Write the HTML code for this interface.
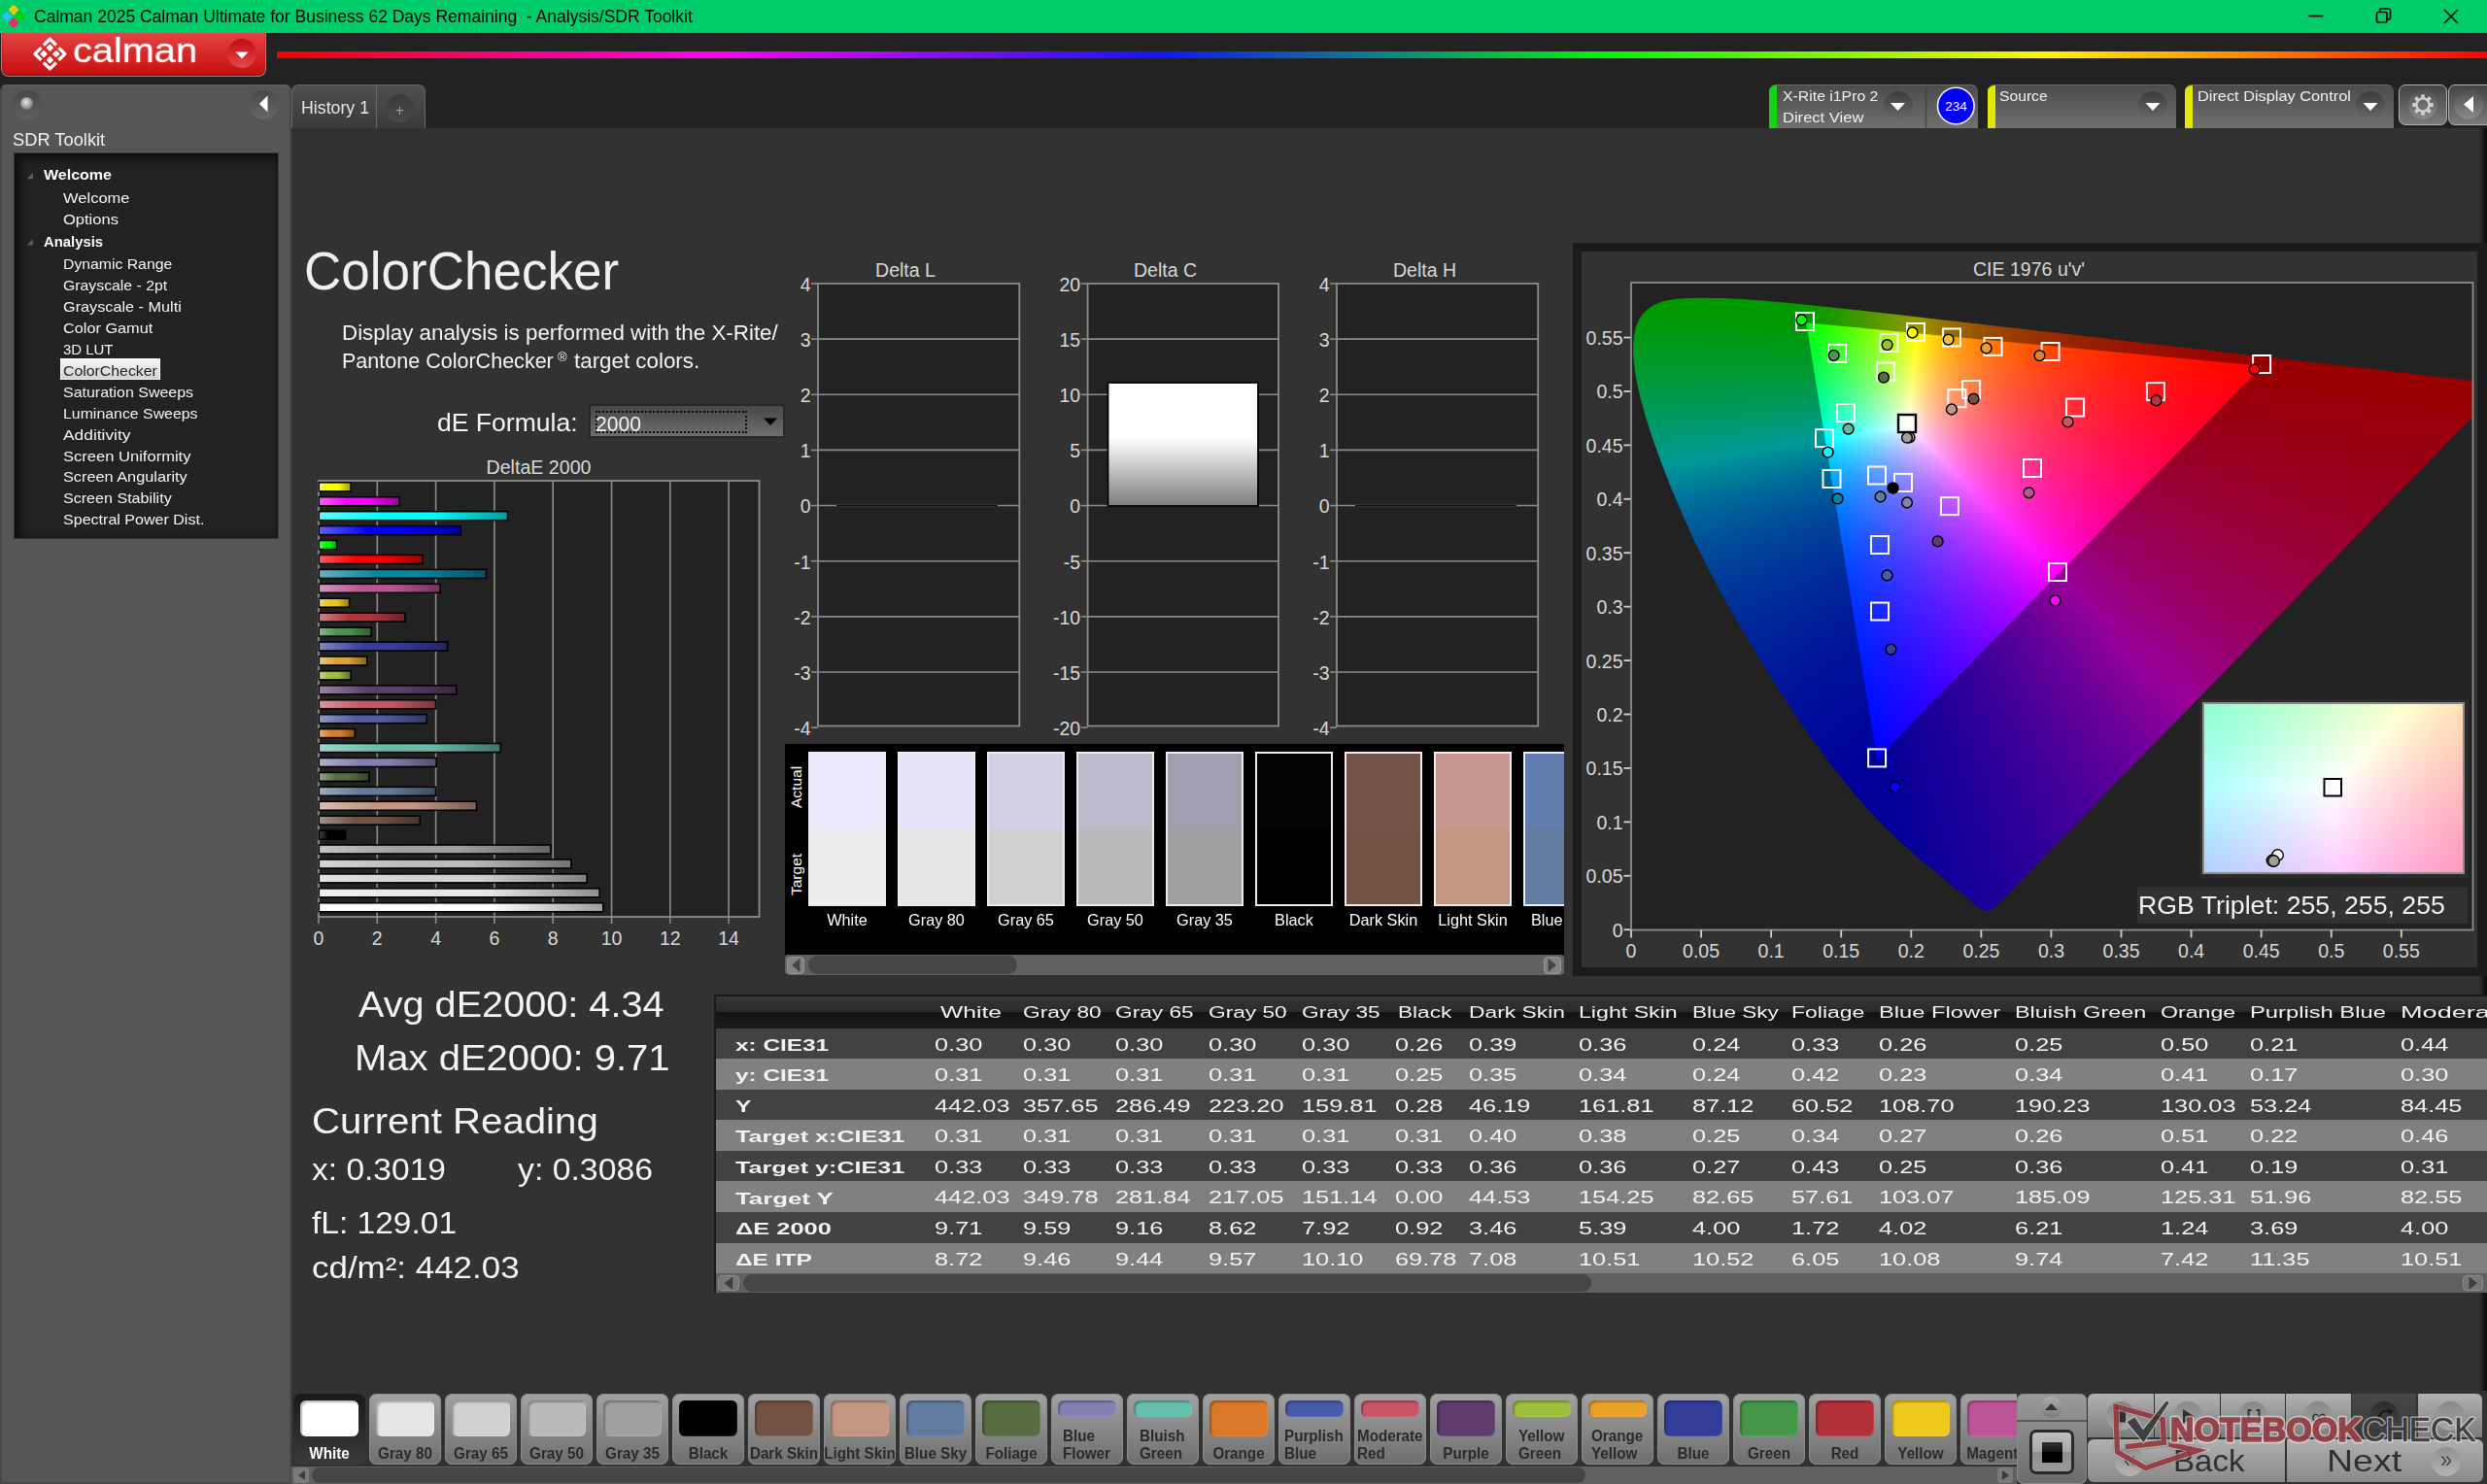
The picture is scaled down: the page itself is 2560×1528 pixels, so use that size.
<!DOCTYPE html><html><head><meta charset="utf-8"><title>Calman</title><style>
*{box-sizing:border-box;margin:0;padding:0}
html,body{width:2560px;height:1528px;overflow:hidden;background:#222}
body{font-family:"Liberation Sans",sans-serif;color:#f0f0f0;position:relative}
.a{position:absolute}
.cg{position:absolute;inset:0}
.t{position:absolute;white-space:nowrap;transform-origin:0 0;line-height:1}
svg{position:absolute;left:0;top:0}
svg text{font-family:"Liberation Sans",sans-serif}
#titlebar{left:0;top:0;width:2560px;height:34px;background:#00cc6a}
#left{left:0;top:87px;width:300px;height:1441px;background:#565656;border:2px solid #484848;border-top-color:#5c5c5c;border-radius:6px 6px 0 0}
#tree{left:14px;top:157px;width:273px;height:398px;background:#222;border:1px solid #3a3a3a;box-shadow:inset 6px 6px 8px rgba(0,0,0,.55),inset -2px -2px 4px rgba(0,0,0,.3)}
#main{left:300px;top:132px;width:2260px;height:1396px;background:#323232}
.tab{position:absolute;background:linear-gradient(#505050,#3a3a3a);border:1px solid #666;border-bottom:none;border-radius:7px 7px 0 0}
.dtab{position:absolute;top:87px;height:45px;background:linear-gradient(#4c4c4c,#707070);border-radius:7px 7px 0 0;border-top:1px solid #6a6a6a}
.rb{position:absolute;border-radius:50%;background:linear-gradient(#3c3c3c,#6a6a6a)}
</style></head><body>
<div id="main" class="a"></div>
<div class="a" style="left:2552px;top:132px;width:8px;height:1300px;background:linear-gradient(90deg,#323232,#151515 60%,#0e0e0e)"></div>
<div id="titlebar" class="a"></div>
<svg width="40" height="34" viewBox="0 0 40 34"><g transform="translate(14,16.9) rotate(45)"><path d="M-1.1 -7H-7V-1.1" fill="none" stroke="#ffc800" stroke-width="3.2" stroke-linejoin="round"/><rect x="-5.15" y="-5.15" width="4.3" height="4.3" rx="0.774" fill="#ffc800"/><path d="M1.1 -7H7V-1.1" fill="none" stroke="#00d200" stroke-width="3.2" stroke-linejoin="round"/><rect x="0.85" y="-5.15" width="4.3" height="4.3" rx="0.774" fill="#00d200"/><path d="M1.1 7H7V1.1" fill="none" stroke="#ff1e64" stroke-width="3.2" stroke-linejoin="round"/><rect x="0.85" y="0.85" width="4.3" height="4.3" rx="0.774" fill="#ff1e64"/><path d="M-1.1 7H-7V1.1" fill="none" stroke="#32beff" stroke-width="3.2" stroke-linejoin="round"/><rect x="-5.15" y="0.85" width="4.3" height="4.3" rx="0.774" fill="#32beff"/></g></svg>
<div class="t" style="left:35.3px;top:8.3px;font-size:18.8px;transform:scaleX(0.9320);color:#000;">Calman 2025 Calman Ultimate for Business 62 Days Remaining&nbsp; - Analysis/SDR Toolkit</div>
<svg width="2560" height="34" viewBox="0 0 2560 34" fill="none" stroke="#0a0a0a" stroke-width="1.7"><path d="M2376.300 16.500h15"/><rect x="2446.5" y="12.500" width="10.5" height="10.500" rx="2"/><path d="M2449.500 12.500v-1.500a2 2 0 0 1 2-2h7a2 2 0 0 1 2 2v7a2 2 0 0 1-2 2h-1.500"/><path d="M2516 10l14 14M2530 10l-14 14"/></svg>
<div class="a" style="left:1px;top:34px;width:273px;height:45px;border-radius:0 0 8px 8px;background:linear-gradient(#e24444,#d62a2a 45%,#c80e0e);border:1px solid #8a8a8a;border-top:none;box-shadow:inset 0 -1px 2px rgba(120,0,0,.5)"></div>
<svg width="280" height="80" viewBox="0 0 280 80"><g transform="translate(51.4,55.5) rotate(45)"><path d="M-1.8 -10.9H-10.9V-1.8" fill="none" stroke="#fff" stroke-width="3.3" stroke-linejoin="round"/><rect x="-7.3" y="-7.3" width="5.6" height="5.6" rx="1.008" fill="#fff"/><path d="M1.8 -10.9H10.9V-1.8" fill="none" stroke="#fff" stroke-width="3.3" stroke-linejoin="round"/><rect x="1.7" y="-7.3" width="5.6" height="5.6" rx="1.008" fill="#fff"/><path d="M1.8 10.9H10.9V1.8" fill="none" stroke="#fff" stroke-width="3.3" stroke-linejoin="round"/><rect x="1.7" y="1.7" width="5.6" height="5.6" rx="1.008" fill="#fff"/><path d="M-1.8 10.9H-10.9V1.8" fill="none" stroke="#fff" stroke-width="3.3" stroke-linejoin="round"/><rect x="-7.3" y="1.7" width="5.6" height="5.6" rx="1.008" fill="#fff"/></g>
<circle cx="249" cy="55" r="15" fill="url(#cbg)"/><defs><linearGradient id="cbg" x1="0" y1="0" x2="0" y2="1"><stop offset="0" stop-color="#c20a14"/><stop offset="1" stop-color="#e44a4a"/></linearGradient></defs><path d="M242.500 53.500h13l-6.500 7z" fill="#fff"/></svg>
<div class="t" style="left:75.0px;top:34.3px;font-size:35px;transform:scaleX(1.1349);color:#fff;text-shadow:0 0 2px rgba(255,255,255,.5)">calman</div>
<div class="a" style="left:284.700px;top:52.500px;width:2275.300px;height:7.800px;background:linear-gradient(90deg,#f40000 0%,#ff00f4 20%,#1414ff 40%,#00f40a 60%,#fff400 80%,#ff0000 100%)"></div>
<div class="tab" style="left:300px;top:87px;width:138px;height:45px"></div>
<div class="a" style="left:387px;top:88px;width:1px;height:44px;background:#686868"></div>
<div class="t" style="left:309.6px;top:102.1px;font-size:18px;transform:scaleX(0.9858);color:#e6e6e6;">History 1</div>
<div class="rb" style="left:397px;top:97px;width:29px;height:29px;background:linear-gradient(#3a3a3a,#4a4a4a)"></div>
<div class="t" style="left:406.5px;top:104.5px;font-size:17px;transform:scaleX(0.9050);color:#9a9a9a;">+</div>
<div class="dtab" style="left:1821px;width:215px;overflow:hidden"><div class="a" style="left:0;top:0;width:8px;height:45px;background:#14d214"></div></div>
<div class="dtab" style="left:2046px;width:194px;overflow:hidden"><div class="a" style="left:0;top:0;width:8px;height:45px;background:#e6e600"></div></div>
<div class="dtab" style="left:2249px;width:215px;overflow:hidden"><div class="a" style="left:0;top:0;width:8px;height:45px;background:#e6e600"></div></div>
<div class="t" style="left:1835.1px;top:90.5px;font-size:15.2px;transform:scaleX(1.0410);color:#f0f0f0;">X-Rite i1Pro 2</div>
<div class="t" style="left:1835.1px;top:112.8px;font-size:15.2px;transform:scaleX(1.0894);color:#f0f0f0;">Direct View</div>
<div class="t" style="left:2058.3px;top:90.5px;font-size:15.2px;transform:scaleX(1.0323);color:#f0f0f0;">Source</div>
<div class="t" style="left:2262.4px;top:90.5px;font-size:15.2px;transform:scaleX(1.0749);color:#f0f0f0;">Direct Display Control</div>
<div class="rb" style="left:1938.5px;top:94px;width:30px;height:30px"></div>
<div class="rb" style="left:2201px;top:94px;width:30px;height:30px"></div>
<div class="rb" style="left:2425px;top:94px;width:30px;height:30px"></div>
<svg width="2560" height="140" viewBox="0 0 2560 140"><g fill="#fff"><path d="M1946 106h15l-7.500 8z"/><path d="M2208.500 106h15l-7.500 8z"/><path d="M2432.500 106h15l-7.500 8z"/></g><path d="M1982.500 91v41" stroke="#444" stroke-width="1.500"/><circle cx="2013.300" cy="109" r="18.800" fill="#0000fa" stroke="#f4f4ff" stroke-width="1.600"/><text x="2002.300" y="114" font-size="12.400" fill="#fff" textLength="22.400" lengthAdjust="spacingAndGlyphs">234</text></svg>
<div class="a" style="left:2469px;top:87px;width:50px;height:42px;border-radius:7px;border:1.500px solid #b0b0b0;background:linear-gradient(#444,#7a7a7a)"></div>
<div class="a" style="left:2520px;top:87px;width:50px;height:42px;border-radius:7px;border:1.500px solid #b0b0b0;background:linear-gradient(#444,#7a7a7a)"></div>
<div class="rb" style="left:2479px;top:93px;width:30px;height:30px;background:linear-gradient(#505050,#8a8a8a)"></div>
<div class="rb" style="left:2526px;top:93px;width:30px;height:30px;background:linear-gradient(#505050,#8a8a8a)"></div>
<svg width="2560" height="140" viewBox="0 0 2560 140"><g transform="translate(2494,108)" fill="#cfcfcf"><rect x="-1.900" y="-10.800" width="3.800" height="4.200" rx=".8" transform="rotate(0)"/><rect x="-1.900" y="-10.800" width="3.800" height="4.200" rx=".8" transform="rotate(45)"/><rect x="-1.900" y="-10.800" width="3.800" height="4.200" rx=".8" transform="rotate(90)"/><rect x="-1.900" y="-10.800" width="3.800" height="4.200" rx=".8" transform="rotate(135)"/><rect x="-1.900" y="-10.800" width="3.800" height="4.200" rx=".8" transform="rotate(180)"/><rect x="-1.900" y="-10.800" width="3.800" height="4.200" rx=".8" transform="rotate(225)"/><rect x="-1.900" y="-10.800" width="3.800" height="4.200" rx=".8" transform="rotate(270)"/><rect x="-1.900" y="-10.800" width="3.800" height="4.200" rx=".8" transform="rotate(315)"/><circle r="6.600" fill="none" stroke="#cfcfcf" stroke-width="2.400"/></g><path d="M2546 99v17l-10-8.500z" fill="#fff"/></svg>
<div id="left" class="a"></div>
<div class="rb" style="left:13px;top:93px;width:30px;height:30px;background:linear-gradient(#484848,#606060)"></div>
<div class="rb" style="left:21px;top:100px;width:13px;height:13px;background:radial-gradient(circle at 45% 40%,#e8e8e8,#8a8a8a 60%,#555)"></div>
<div class="rb" style="left:256px;top:93px;width:30px;height:30px;background:linear-gradient(#484848,#686868)"></div>
<svg width="300" height="140" viewBox="0 0 300 140"><path d="M275.500 98.500v17l-8.500-8.500z" fill="#fff"/></svg>
<div class="t" style="left:13.4px;top:135.7px;font-size:17.6px;transform:scaleX(1.0392);color:#f0f0f0;">SDR Toolkit</div>
<div id="tree" class="a"></div>
<div class="t" style="left:45.0px;top:172.3px;font-size:15px;transform:scaleX(1.0673);color:#fff;font-weight:bold;">Welcome</div>
<svg width="300" height="600" viewBox="0 0 300 600"><path d="M34 184.3 v-6.500l-6.500 6.500z" fill="#5a5a5a"/></svg>
<div class="t" style="left:64.8px;top:196.0px;font-size:15px;transform:scaleX(1.1004);color:#f4f4f4;">Welcome</div>
<div class="t" style="left:64.8px;top:218.0px;font-size:15px;transform:scaleX(1.1003);color:#f4f4f4;">Options</div>
<div class="t" style="left:45.0px;top:240.5px;font-size:15px;transform:scaleX(0.9889);color:#fff;font-weight:bold;">Analysis</div>
<svg width="300" height="600" viewBox="0 0 300 600"><path d="M34 252.5 v-6.500l-6.500 6.500z" fill="#5a5a5a"/></svg>
<div class="t" style="left:64.8px;top:264.4px;font-size:15px;transform:scaleX(1.0513);color:#f4f4f4;">Dynamic Range</div>
<div class="t" style="left:64.8px;top:286.3px;font-size:15px;transform:scaleX(1.0531);color:#f4f4f4;">Grayscale - 2pt</div>
<div class="t" style="left:64.8px;top:308.2px;font-size:15px;transform:scaleX(1.0823);color:#f4f4f4;">Grayscale - Multi</div>
<div class="t" style="left:64.8px;top:330.0px;font-size:15px;transform:scaleX(1.0845);color:#f4f4f4;">Color Gamut</div>
<div class="t" style="left:64.8px;top:352.0px;font-size:15px;transform:scaleX(0.9966);color:#f4f4f4;">3D LUT</div>
<div class="a" style="left:61.800px;top:369px;width:103.200px;height:21.700px;background:linear-gradient(#f6f6f6,#d2d2d2);border:1px solid #fff"></div>
<div class="t" style="left:64.8px;top:374.1px;font-size:15px;transform:scaleX(1.0558);color:#222;">ColorChecker</div>
<div class="t" style="left:64.8px;top:396.0px;font-size:15px;transform:scaleX(1.0649);color:#f4f4f4;">Saturation Sweeps</div>
<div class="t" style="left:64.8px;top:418.3px;font-size:15px;transform:scaleX(1.0580);color:#f4f4f4;">Luminance Sweeps</div>
<div class="t" style="left:64.8px;top:440.2px;font-size:15px;transform:scaleX(1.1576);color:#f4f4f4;">Additivity</div>
<div class="t" style="left:64.8px;top:462.1px;font-size:15px;transform:scaleX(1.1031);color:#f4f4f4;">Screen Uniformity</div>
<div class="t" style="left:64.8px;top:483.2px;font-size:15px;transform:scaleX(1.0862);color:#f4f4f4;">Screen Angularity</div>
<div class="t" style="left:64.8px;top:505.1px;font-size:15px;transform:scaleX(1.0718);color:#f4f4f4;">Screen Stability</div>
<div class="t" style="left:64.8px;top:527.2px;font-size:15px;transform:scaleX(1.0699);color:#f4f4f4;">Spectral Power Dist.</div>
<div class="t" style="left:312.5px;top:250.5px;font-size:56px;transform:scaleX(0.9465);color:#f0f0f0;">ColorChecker</div>
<div class="t" style="left:351.9px;top:331.7px;font-size:22px;transform:scaleX(1.0167);color:#f4f4f4;">Display analysis is performed with the X-Rite/</div>
<div class="t" style="left:351.9px;top:361.0px;font-size:22px;transform:scaleX(0.9785);color:#f4f4f4;">Pantone ColorChecker</div>
<div class="t" style="left:574.2px;top:362.2px;font-size:12.5px;transform:scaleX(1.0414);color:#f4f4f4;">&#174;</div>
<div class="t" style="left:591.0px;top:361.0px;font-size:22px;transform:scaleX(1.0160);color:#f4f4f4;">target colors.</div>
<div class="t" style="left:450.1px;top:422.2px;font-size:26.3px;transform:scaleX(1.0100);color:#f4f4f4;">dE Formula:</div>
<div class="a" style="left:606.300px;top:416px;width:201.300px;height:35.200px;background:linear-gradient(#484848,#6e6e6e);border:2px solid #292929"></div>
<div class="a" style="left:612.500px;top:422.500px;width:156px;height:23px;border:2px dotted #0c0c0c"></div>
<div class="t" style="left:613.0px;top:426.3px;font-size:22px;transform:scaleX(0.9602);color:#f4f4f4;">2000</div>
<svg width="2560" height="460" viewBox="0 0 2560 460"><path d="M786 430.500h14l-7 7.500z" fill="#000"/></svg>
<div class="a" style="left:1618.500px;top:250px;width:941.500px;height:754.500px;background:#1b1b1b"></div>
<div class="a" style="left:1628px;top:259px;width:922px;height:737px;background:#323232"></div>
<div class="a" style="left:1679px;top:291px;width:867px;height:667px;background:#222"></div>
<div id="cie" style="position:absolute;left:1679px;top:291px;width:867px;height:667px;overflow:hidden">
<div style="position:absolute;inset:0;background:#000;isolation:isolate;clip-path:polygon(376.5px 641.4px,374.8px 642.8px,373.2px 644.1px,371.4px 645.0px,369.5px 645.7px,367.6px 646.2px,365.5px 646.4px,363.4px 646.3px,361.2px 646.0px,359.6px 644.9px,357.8px 643.5px,355.7px 641.9px,353.4px 640.0px,350.7px 637.8px,347.8px 635.3px,344.6px 632.6px,341.0px 629.6px,337.0px 626.3px,332.7px 622.8px,328.0px 618.9px,322.8px 614.6px,317.3px 610.1px,311.3px 605.1px,304.8px 599.8px,297.7px 593.9px,290.0px 587.3px,281.7px 579.9px,272.9px 571.8px,263.6px 562.9px,253.5px 552.8px,242.3px 540.7px,229.5px 526.0px,215.5px 508.9px,200.5px 489.5px,184.7px 467.9px,168.2px 444.0px,151.1px 417.8px,133.7px 389.8px,116.1px 360.4px,98.7px 330.3px,82.2px 300.0px,67.1px 269.9px,53.6px 240.5px,41.6px 212.4px,31.3px 186.0px,22.5px 161.7px,15.4px 139.8px,10.0px 120.4px,6.1px 103.3px,3.6px 88.4px,2.2px 75.5px,2.1px 64.3px,3.0px 54.5px,4.9px 46.0px,7.8px 38.8px,11.6px 32.8px,16.2px 27.9px,21.5px 24.0px,27.4px 21.2px,33.7px 19.1px,40.5px 17.7px,47.6px 16.8px,55.1px 16.3px,62.7px 15.9px,70.5px 15.8px,78.2px 15.8px,86.0px 15.9px,93.9px 16.1px,101.8px 16.4px,110.0px 16.8px,118.4px 17.3px,127.1px 17.9px,136.1px 18.6px,145.3px 19.4px,154.8px 20.2px,164.6px 21.2px,174.9px 22.2px,185.5px 23.3px,196.5px 24.4px,208.0px 25.7px,219.9px 27.0px,232.3px 28.3px,245.2px 29.8px,258.6px 31.3px,272.5px 32.8px,287.0px 34.5px,301.9px 36.2px,317.4px 38.0px,333.5px 39.8px,350.1px 41.7px,367.2px 43.7px,384.8px 45.7px,403.0px 47.8px,421.6px 50.0px,440.6px 52.1px,460.0px 54.3px,479.8px 56.6px,499.7px 58.9px,519.7px 61.2px,539.4px 63.5px,558.8px 65.7px,578.0px 67.9px,597.2px 70.1px,616.1px 72.3px,634.4px 74.4px,651.9px 76.4px,668.7px 78.3px,684.7px 80.1px,700.1px 81.9px,714.6px 83.6px,728.2px 85.2px,740.9px 86.6px,752.9px 88.0px,764.0px 89.3px,774.4px 90.5px,784.1px 91.6px,793.3px 92.6px,801.9px 93.6px,810.2px 94.6px,818.0px 95.5px,825.3px 96.3px,832.2px 97.1px,838.6px 97.9px,844.4px 98.5px,849.8px 99.2px,854.7px 99.7px,859.2px 100.2px,863.4px 100.7px,867.1px 101.1px,870.5px 101.5px,873.6px 101.9px,876.3px 102.2px,878.7px 102.5px,880.8px 102.7px,882.7px 102.9px,884.2px 103.1px,885.6px 103.3px,886.9px 103.4px,888.0px 103.5px,889.1px 103.7px,890.2px 103.8px,891.2px 103.9px,892.2px 104.0px,893.2px 104.1px,894.1px 104.2px,894.9px 104.3px,895.7px 104.4px,896.4px 104.5px,897.1px 104.6px,897.6px 104.6px,898.0px 104.7px,898.4px 104.7px,898.6px 104.8px,898.7px 104.8px,898.6px 104.8px)">
<div class="cg" style="mix-blend-mode:screen;isolation:isolate"><div class="cg" style="background:conic-gradient(at 252.8px 491.2px,#910000 0.00deg,#c00000 2.50deg,#ea0000 4.50deg,#ff0000 5.50deg,#ff0000 170.50deg,#000000 171.00deg,#000000 350.50deg,#020000 351.00deg,#2d0000 354.00deg,#5d0000 357.00deg,#880000 359.50deg,#910000 360.00deg)"></div><div class="cg" style="mix-blend-mode:darken;background:conic-gradient(at 180.2px 42.7px,#ff0000 0.00deg,#ff0000 134.50deg,#fd0000 135.00deg,#dd0000 138.00deg,#bb0000 141.50deg,#9a0000 145.50deg,#780000 150.00deg,#540000 155.50deg,#2e0000 162.00deg,#010000 170.50deg,#000000 171.00deg,#000000 350.50deg,#ff0000 351.00deg,#ff0000 360.00deg)"></div></div>
<div class="cg" style="mix-blend-mode:screen;isolation:isolate"><div class="cg" style="background:conic-gradient(at 252.8px 491.2px,#00ff00 0.00deg,#00ff00 5.00deg,#00fe00 5.50deg,#00e900 6.50deg,#00ce00 8.00deg,#00b700 9.50deg,#00a300 11.00deg,#008d00 13.00deg,#007600 15.50deg,#006000 18.50deg,#004b00 22.00deg,#003800 26.00deg,#002500 31.00deg,#001100 37.50deg,#000000 44.50deg,#000000 224.00deg,#00ff00 224.50deg,#00ff00 360.00deg)"></div><div class="cg" style="mix-blend-mode:darken;background:conic-gradient(at 649.7px 86.6px,#00ff00 0.00deg,#00ff00 44.00deg,#000000 44.50deg,#000000 224.50deg,#001400 231.50deg,#002700 237.00deg,#003a00 241.50deg,#004d00 245.00deg,#006000 248.00deg,#007300 250.50deg,#008b00 253.00deg,#00a100 255.00deg,#00b500 256.50deg,#00cd00 258.00deg,#00e800 259.50deg,#00fe00 260.50deg,#00ff00 261.00deg,#00ff00 360.00deg)"></div></div>
<div class="cg" style="mix-blend-mode:screen;isolation:isolate"><div class="cg" style="background:conic-gradient(at 180.2px 42.7px,#000000 0.00deg,#000000 95.00deg,#000001 95.50deg,#000029 104.50deg,#00004c 111.50deg,#00006c 117.00deg,#00008c 122.00deg,#0000aa 126.00deg,#0000c8 129.50deg,#0000e6 132.50deg,#0000fb 134.50deg,#0000ff 135.00deg,#0000ff 275.00deg,#000000 275.50deg,#000000 360.00deg)"></div><div class="cg" style="mix-blend-mode:darken;background:conic-gradient(at 649.7px 86.6px,#000000 0.00deg,#000000 95.00deg,#0000ff 95.50deg,#0000ff 260.50deg,#0000ea 261.50deg,#0000c0 263.50deg,#000090 266.00deg,#000065 268.50deg,#00003d 271.00deg,#000012 274.00deg,#000004 275.00deg,#000000 275.50deg,#000000 360.00deg)"></div></div>
<div class="cg" style="background:rgba(0,0,0,.4);clip-path:polygon(evenodd,0 0,867px 0,867px 667px,0 667px,0 0,649.7px 85.9px,180.3px 41.3px,252.9px 490.6px,649.7px 85.9px)"></div>
</div></div>
<div class="a" style="left:2263.500px;top:719.500px;width:277px;height:184px;background:#2b2b2b"></div>
<div class="a" style="left:2266.500px;top:722.500px;width:270.500px;height:177.500px;background:#8c8c8c"></div>
<div style="position:absolute;left:2268.5px;top:724.5px;width:266.5px;height:173.5px;background:#000;isolation:isolate;overflow:hidden">
<div class="cg" style="mix-blend-mode:screen;isolation:isolate"><div class="cg" style="background:conic-gradient(at -790.8px 1080.6px,#880000 35.896deg,#ac0000 38.341deg,#d10000 40.511deg,#f60000 42.474deg,#ff0000 42.887deg,#ff0000 49.671deg)"></div><div class="cg" style="mix-blend-mode:darken;background:conic-gradient(at 60.6px -915.2px,#ff0000 167.022deg,#ff0000 175.897deg,#cb0000 180.633deg,#a90000 184.089deg)"></div></div>
<div class="cg" style="mix-blend-mode:screen;isolation:isolate"><div class="cg" style="background:conic-gradient(at -790.8px 1080.6px,#00ff00 35.896deg,#00ff00 42.887deg,#00df00 44.540deg,#00c100 46.365deg,#00a300 48.431deg,#009400 49.671deg)"></div><div class="cg" style="mix-blend-mode:darken;background:conic-gradient(at 1990.5px 82.7px,#00c200 266.685deg,#00e800 268.737deg,#00ff00 269.914deg,#00ff00 273.047deg)"></div></div>
<div class="cg" style="mix-blend-mode:screen;isolation:isolate"><div class="cg" style="background:conic-gradient(at 60.6px -915.2px,#0000b1 167.022deg,#0000cb 170.521deg,#0000e6 173.550deg,#0000ff 175.897deg,#0000ff 184.089deg)"></div><div class="cg" style="mix-blend-mode:darken;background:conic-gradient(at 1990.5px 82.7px,#0000ff 266.685deg,#0000fe 269.914deg,#0000df 271.536deg,#0000c5 273.047deg)"></div></div>
</div>
<div class="a" style="left:2200px;top:913px;width:340px;height:37.500px;background:#323232"></div>
<div class="t" style="left:2200.5px;top:919.9px;font-size:25.7px;transform:scaleX(1.0385);color:#f4f4f4;">RGB Triplet: 255, 255, 255</div>
<svg width="2560" height="1528" viewBox="0 0 2560 1528">
<defs><linearGradient id="b0"><stop offset="0" stop-color="#ffff60"/><stop offset=".35" stop-color="#ffff00"/><stop offset=".6" stop-color="#ffff00"/><stop offset="1" stop-color="#9e9e00"/></linearGradient><linearGradient id="b1"><stop offset="0" stop-color="#ff60ff"/><stop offset=".35" stop-color="#ff00ff"/><stop offset=".6" stop-color="#ff00ff"/><stop offset="1" stop-color="#9e009e"/></linearGradient><linearGradient id="b2"><stop offset="0" stop-color="#60ffff"/><stop offset=".35" stop-color="#00ffff"/><stop offset=".6" stop-color="#00ffff"/><stop offset="1" stop-color="#009e9e"/></linearGradient><linearGradient id="b3"><stop offset="0" stop-color="#6060ff"/><stop offset=".35" stop-color="#0000ff"/><stop offset=".6" stop-color="#0000ff"/><stop offset="1" stop-color="#00009e"/></linearGradient><linearGradient id="b4"><stop offset="0" stop-color="#60ff60"/><stop offset=".35" stop-color="#00ff00"/><stop offset=".6" stop-color="#00ff00"/><stop offset="1" stop-color="#009e00"/></linearGradient><linearGradient id="b5"><stop offset="0" stop-color="#ff6060"/><stop offset=".35" stop-color="#ff0000"/><stop offset=".6" stop-color="#ff0000"/><stop offset="1" stop-color="#9e0000"/></linearGradient><linearGradient id="b6"><stop offset="0" stop-color="#65b3c4"/><stop offset=".35" stop-color="#0885a1"/><stop offset=".6" stop-color="#0885a1"/><stop offset="1" stop-color="#045263"/></linearGradient><linearGradient id="b7"><stop offset="0" stop-color="#d496bd"/><stop offset=".35" stop-color="#bb5695"/><stop offset=".6" stop-color="#bb5695"/><stop offset="1" stop-color="#73355c"/></linearGradient><linearGradient id="b8"><stop offset="0" stop-color="#f0dc74"/><stop offset=".35" stop-color="#e7c71f"/><stop offset=".6" stop-color="#e7c71f"/><stop offset="1" stop-color="#8f7b13"/></linearGradient><linearGradient id="b9"><stop offset="0" stop-color="#cd8286"/><stop offset=".35" stop-color="#af363c"/><stop offset=".6" stop-color="#af363c"/><stop offset="1" stop-color="#6c2125"/></linearGradient><linearGradient id="b10"><stop offset="0" stop-color="#8cbc8e"/><stop offset=".35" stop-color="#469449"/><stop offset=".6" stop-color="#469449"/><stop offset="1" stop-color="#2b5b2d"/></linearGradient><linearGradient id="b11"><stop offset="0" stop-color="#8386bd"/><stop offset=".35" stop-color="#383d96"/><stop offset=".6" stop-color="#383d96"/><stop offset="1" stop-color="#22255d"/></linearGradient><linearGradient id="b12"><stop offset="0" stop-color="#ebc57d"/><stop offset=".35" stop-color="#e0a32e"/><stop offset=".6" stop-color="#e0a32e"/><stop offset="1" stop-color="#8a651c"/></linearGradient><linearGradient id="b13"><stop offset="0" stop-color="#c2d588"/><stop offset=".35" stop-color="#9dbc40"/><stop offset=".6" stop-color="#9dbc40"/><stop offset="1" stop-color="#617427"/></linearGradient><linearGradient id="b14"><stop offset="0" stop-color="#9b86a3"/><stop offset=".35" stop-color="#5e3c6c"/><stop offset=".6" stop-color="#5e3c6c"/><stop offset="1" stop-color="#3a2542"/></linearGradient><linearGradient id="b15"><stop offset="0" stop-color="#d8989e"/><stop offset=".35" stop-color="#c15a63"/><stop offset=".6" stop-color="#c15a63"/><stop offset="1" stop-color="#77373d"/></linearGradient><linearGradient id="b16"><stop offset="0" stop-color="#9299c7"/><stop offset=".35" stop-color="#505ba6"/><stop offset=".6" stop-color="#505ba6"/><stop offset="1" stop-color="#313866"/></linearGradient><linearGradient id="b17"><stop offset="0" stop-color="#e5af7c"/><stop offset=".35" stop-color="#d67e2c"/><stop offset=".6" stop-color="#d67e2c"/><stop offset="1" stop-color="#844e1b"/></linearGradient><linearGradient id="b18"><stop offset="0" stop-color="#a0d6ca"/><stop offset=".35" stop-color="#67bdaa"/><stop offset=".6" stop-color="#67bdaa"/><stop offset="1" stop-color="#3f7569"/></linearGradient><linearGradient id="b19"><stop offset="0" stop-color="#b3b0ce"/><stop offset=".35" stop-color="#8580b1"/><stop offset=".6" stop-color="#8580b1"/><stop offset="1" stop-color="#524f6d"/></linearGradient><linearGradient id="b20"><stop offset="0" stop-color="#96a38a"/><stop offset=".35" stop-color="#576c43"/><stop offset=".6" stop-color="#576c43"/><stop offset="1" stop-color="#354229"/></linearGradient><linearGradient id="b21"><stop offset="0" stop-color="#9dacc2"/><stop offset=".35" stop-color="#627a9d"/><stop offset=".6" stop-color="#627a9d"/><stop offset="1" stop-color="#3c4b61"/></linearGradient><linearGradient id="b22"><stop offset="0" stop-color="#d9bdb1"/><stop offset=".35" stop-color="#c29682"/><stop offset=".6" stop-color="#c29682"/><stop offset="1" stop-color="#785d50"/></linearGradient><linearGradient id="b23"><stop offset="0" stop-color="#a8938b"/><stop offset=".35" stop-color="#735244"/><stop offset=".6" stop-color="#735244"/><stop offset="1" stop-color="#47322a"/></linearGradient><linearGradient id="b24"><stop offset="0" stop-color="#464646"/><stop offset=".35" stop-color="#000000"/><stop offset=".6" stop-color="#000000"/><stop offset="1" stop-color="#000000"/></linearGradient><linearGradient id="b25"><stop offset="0" stop-color="#c4c4c4"/><stop offset=".35" stop-color="#a0a0a0"/><stop offset=".6" stop-color="#a0a0a0"/><stop offset="1" stop-color="#636363"/></linearGradient><linearGradient id="b26"><stop offset="0" stop-color="#d4d4d4"/><stop offset=".35" stop-color="#bababa"/><stop offset=".6" stop-color="#bababa"/><stop offset="1" stop-color="#737373"/></linearGradient><linearGradient id="b27"><stop offset="0" stop-color="#e2e2e2"/><stop offset=".35" stop-color="#d1d1d1"/><stop offset=".6" stop-color="#d1d1d1"/><stop offset="1" stop-color="#818181"/></linearGradient><linearGradient id="b28"><stop offset="0" stop-color="#efefef"/><stop offset=".35" stop-color="#e6e6e6"/><stop offset=".6" stop-color="#e6e6e6"/><stop offset="1" stop-color="#8e8e8e"/></linearGradient><linearGradient id="b29"><stop offset="0" stop-color="#ffffff"/><stop offset=".35" stop-color="#ffffff"/><stop offset=".6" stop-color="#ffffff"/><stop offset="1" stop-color="#9e9e9e"/></linearGradient></defs><rect x="328" y="495" width="453.5" height="449" fill="#222" stroke="#8c8c8c" stroke-width="1.800"/>
<path d="M388.3 495V944" stroke="#8c8c8c" stroke-width="1.600"/>
<path d="M448.6 495V944" stroke="#8c8c8c" stroke-width="1.600"/>
<path d="M508.9 495V944" stroke="#8c8c8c" stroke-width="1.600"/>
<path d="M569.2 495V944" stroke="#8c8c8c" stroke-width="1.600"/>
<path d="M629.5 495V944" stroke="#8c8c8c" stroke-width="1.600"/>
<path d="M689.8 495V944" stroke="#8c8c8c" stroke-width="1.600"/>
<path d="M750.1 495V944" stroke="#8c8c8c" stroke-width="1.600"/>
<path d="M328 944v7" stroke="#8c8c8c" stroke-width="1.600"/>
<text x="328" y="973" font-size="19.500" fill="#d8d8d8" text-anchor="middle">0</text>
<path d="M388.3 944v7" stroke="#8c8c8c" stroke-width="1.600"/>
<text x="388.3" y="973" font-size="19.500" fill="#d8d8d8" text-anchor="middle">2</text>
<path d="M448.6 944v7" stroke="#8c8c8c" stroke-width="1.600"/>
<text x="448.6" y="973" font-size="19.500" fill="#d8d8d8" text-anchor="middle">4</text>
<path d="M508.9 944v7" stroke="#8c8c8c" stroke-width="1.600"/>
<text x="508.9" y="973" font-size="19.500" fill="#d8d8d8" text-anchor="middle">6</text>
<path d="M569.2 944v7" stroke="#8c8c8c" stroke-width="1.600"/>
<text x="569.2" y="973" font-size="19.500" fill="#d8d8d8" text-anchor="middle">8</text>
<path d="M629.5 944v7" stroke="#8c8c8c" stroke-width="1.600"/>
<text x="629.5" y="973" font-size="19.500" fill="#d8d8d8" text-anchor="middle">10</text>
<path d="M689.8 944v7" stroke="#8c8c8c" stroke-width="1.600"/>
<text x="689.8" y="973" font-size="19.500" fill="#d8d8d8" text-anchor="middle">12</text>
<path d="M750.1 944v7" stroke="#8c8c8c" stroke-width="1.600"/>
<text x="750.1" y="973" font-size="19.500" fill="#d8d8d8" text-anchor="middle">14</text>
<text x="554.500" y="488" font-size="19.500" fill="#d8d8d8" text-anchor="middle" textLength="108" lengthAdjust="spacingAndGlyphs">DeltaE 2000</text>
<rect x="328.3" y="496.8" width="32.865" height="9" fill="url(#b0)" stroke="#000" stroke-width="1.600"/>
<rect x="328.3" y="511.73" width="82.6125" height="9" fill="url(#b1)" stroke="#000" stroke-width="1.600"/>
<rect x="328.3" y="526.66" width="194.167" height="9" fill="url(#b2)" stroke="#000" stroke-width="1.600"/>
<rect x="328.3" y="541.59" width="145.927" height="9" fill="url(#b3)" stroke="#000" stroke-width="1.600"/>
<rect x="328.3" y="556.52" width="18.393" height="9" fill="url(#b4)" stroke="#000" stroke-width="1.600"/>
<rect x="328.3" y="571.45" width="106.732" height="9" fill="url(#b5)" stroke="#000" stroke-width="1.600"/>
<rect x="328.3" y="586.38" width="172.158" height="9" fill="url(#b6)" stroke="#000" stroke-width="1.600"/>
<rect x="328.3" y="601.31" width="124.823" height="9" fill="url(#b7)" stroke="#000" stroke-width="1.600"/>
<rect x="328.3" y="616.24" width="31.3575" height="9" fill="url(#b8)" stroke="#000" stroke-width="1.600"/>
<rect x="328.3" y="631.17" width="88.6425" height="9" fill="url(#b9)" stroke="#000" stroke-width="1.600"/>
<rect x="328.3" y="646.1" width="53.97" height="9" fill="url(#b10)" stroke="#000" stroke-width="1.600"/>
<rect x="328.3" y="661.03" width="132.36" height="9" fill="url(#b11)" stroke="#000" stroke-width="1.600"/>
<rect x="328.3" y="675.96" width="49.4475" height="9" fill="url(#b12)" stroke="#000" stroke-width="1.600"/>
<rect x="328.3" y="690.89" width="32.865" height="9" fill="url(#b13)" stroke="#000" stroke-width="1.600"/>
<rect x="328.3" y="705.82" width="141.405" height="9" fill="url(#b14)" stroke="#000" stroke-width="1.600"/>
<rect x="328.3" y="720.75" width="120.3" height="9" fill="url(#b15)" stroke="#000" stroke-width="1.600"/>
<rect x="328.3" y="735.68" width="110.953" height="9" fill="url(#b16)" stroke="#000" stroke-width="1.600"/>
<rect x="328.3" y="750.61" width="37.086" height="9" fill="url(#b17)" stroke="#000" stroke-width="1.600"/>
<rect x="328.3" y="765.54" width="186.931" height="9" fill="url(#b18)" stroke="#000" stroke-width="1.600"/>
<rect x="328.3" y="780.47" width="120.903" height="9" fill="url(#b19)" stroke="#000" stroke-width="1.600"/>
<rect x="328.3" y="795.4" width="51.558" height="9" fill="url(#b20)" stroke="#000" stroke-width="1.600"/>
<rect x="328.3" y="810.33" width="120.3" height="9" fill="url(#b21)" stroke="#000" stroke-width="1.600"/>
<rect x="328.3" y="825.26" width="162.208" height="9" fill="url(#b22)" stroke="#000" stroke-width="1.600"/>
<rect x="328.3" y="840.19" width="104.019" height="9" fill="url(#b23)" stroke="#000" stroke-width="1.600"/>
<rect x="328.3" y="855.12" width="27.438" height="9" fill="url(#b24)" stroke="#000" stroke-width="1.600"/>
<rect x="328.3" y="870.05" width="238.488" height="9" fill="url(#b25)" stroke="#000" stroke-width="1.600"/>
<rect x="328.3" y="884.98" width="259.593" height="9" fill="url(#b26)" stroke="#000" stroke-width="1.600"/>
<rect x="328.3" y="899.91" width="275.874" height="9" fill="url(#b27)" stroke="#000" stroke-width="1.600"/>
<rect x="328.3" y="914.84" width="288.838" height="9" fill="url(#b28)" stroke="#000" stroke-width="1.600"/>
<rect x="328.3" y="929.77" width="292.457" height="9" fill="url(#b29)" stroke="#000" stroke-width="1.600"/>
<rect x="842" y="292" width="207.3" height="455.5" fill="#222" stroke="#8c8c8c" stroke-width="1.800"/>
<path d="M835 292h7" stroke="#8c8c8c" stroke-width="1.600"/>
<text x="834.5" y="299.8" font-size="19.500" fill="#d8d8d8" text-anchor="end">4</text>
<path d="M842 349.14H1049.3" stroke="#8c8c8c" stroke-width="1.600"/>
<path d="M835 349.14h7" stroke="#8c8c8c" stroke-width="1.600"/>
<text x="834.5" y="356.94" font-size="19.500" fill="#d8d8d8" text-anchor="end">3</text>
<path d="M842 406.28H1049.3" stroke="#8c8c8c" stroke-width="1.600"/>
<path d="M835 406.28h7" stroke="#8c8c8c" stroke-width="1.600"/>
<text x="834.5" y="414.08" font-size="19.500" fill="#d8d8d8" text-anchor="end">2</text>
<path d="M842 463.42H1049.3" stroke="#8c8c8c" stroke-width="1.600"/>
<path d="M835 463.42h7" stroke="#8c8c8c" stroke-width="1.600"/>
<text x="834.5" y="471.22" font-size="19.500" fill="#d8d8d8" text-anchor="end">1</text>
<path d="M842 520.56H1049.3" stroke="#8c8c8c" stroke-width="1.600"/>
<path d="M835 520.56h7" stroke="#8c8c8c" stroke-width="1.600"/>
<text x="834.5" y="528.36" font-size="19.500" fill="#d8d8d8" text-anchor="end">0</text>
<path d="M842 577.7H1049.3" stroke="#8c8c8c" stroke-width="1.600"/>
<path d="M835 577.7h7" stroke="#8c8c8c" stroke-width="1.600"/>
<text x="834.5" y="585.5" font-size="19.500" fill="#d8d8d8" text-anchor="end">-1</text>
<path d="M842 634.84H1049.3" stroke="#8c8c8c" stroke-width="1.600"/>
<path d="M835 634.84h7" stroke="#8c8c8c" stroke-width="1.600"/>
<text x="834.5" y="642.64" font-size="19.500" fill="#d8d8d8" text-anchor="end">-2</text>
<path d="M842 691.98H1049.3" stroke="#8c8c8c" stroke-width="1.600"/>
<path d="M835 691.98h7" stroke="#8c8c8c" stroke-width="1.600"/>
<text x="834.5" y="699.78" font-size="19.500" fill="#d8d8d8" text-anchor="end">-3</text>
<path d="M835 749.12h7" stroke="#8c8c8c" stroke-width="1.600"/>
<text x="834.5" y="756.92" font-size="19.500" fill="#d8d8d8" text-anchor="end">-4</text>
<text x="932" y="285" font-size="19.500" fill="#d8d8d8" text-anchor="middle">Delta L</text>
<rect x="1119.6" y="292" width="196.4" height="455.5" fill="#222" stroke="#8c8c8c" stroke-width="1.800"/>
<path d="M1112.6 292h7" stroke="#8c8c8c" stroke-width="1.600"/>
<text x="1112.1" y="299.8" font-size="19.500" fill="#d8d8d8" text-anchor="end">20</text>
<path d="M1119.6 349.14H1316" stroke="#8c8c8c" stroke-width="1.600"/>
<path d="M1112.6 349.14h7" stroke="#8c8c8c" stroke-width="1.600"/>
<text x="1112.1" y="356.94" font-size="19.500" fill="#d8d8d8" text-anchor="end">15</text>
<path d="M1119.6 406.28H1316" stroke="#8c8c8c" stroke-width="1.600"/>
<path d="M1112.6 406.28h7" stroke="#8c8c8c" stroke-width="1.600"/>
<text x="1112.1" y="414.08" font-size="19.500" fill="#d8d8d8" text-anchor="end">10</text>
<path d="M1119.6 463.42H1316" stroke="#8c8c8c" stroke-width="1.600"/>
<path d="M1112.6 463.42h7" stroke="#8c8c8c" stroke-width="1.600"/>
<text x="1112.1" y="471.22" font-size="19.500" fill="#d8d8d8" text-anchor="end">5</text>
<path d="M1119.6 520.56H1316" stroke="#8c8c8c" stroke-width="1.600"/>
<path d="M1112.6 520.56h7" stroke="#8c8c8c" stroke-width="1.600"/>
<text x="1112.1" y="528.36" font-size="19.500" fill="#d8d8d8" text-anchor="end">0</text>
<path d="M1119.6 577.7H1316" stroke="#8c8c8c" stroke-width="1.600"/>
<path d="M1112.6 577.7h7" stroke="#8c8c8c" stroke-width="1.600"/>
<text x="1112.1" y="585.5" font-size="19.500" fill="#d8d8d8" text-anchor="end">-5</text>
<path d="M1119.6 634.84H1316" stroke="#8c8c8c" stroke-width="1.600"/>
<path d="M1112.6 634.84h7" stroke="#8c8c8c" stroke-width="1.600"/>
<text x="1112.1" y="642.64" font-size="19.500" fill="#d8d8d8" text-anchor="end">-10</text>
<path d="M1119.6 691.98H1316" stroke="#8c8c8c" stroke-width="1.600"/>
<path d="M1112.6 691.98h7" stroke="#8c8c8c" stroke-width="1.600"/>
<text x="1112.1" y="699.78" font-size="19.500" fill="#d8d8d8" text-anchor="end">-15</text>
<path d="M1112.6 749.12h7" stroke="#8c8c8c" stroke-width="1.600"/>
<text x="1112.1" y="756.92" font-size="19.500" fill="#d8d8d8" text-anchor="end">-20</text>
<text x="1199.5" y="285" font-size="19.500" fill="#d8d8d8" text-anchor="middle">Delta C</text>
<rect x="1376" y="292" width="207.2" height="455.5" fill="#222" stroke="#8c8c8c" stroke-width="1.800"/>
<path d="M1369 292h7" stroke="#8c8c8c" stroke-width="1.600"/>
<text x="1368.5" y="299.8" font-size="19.500" fill="#d8d8d8" text-anchor="end">4</text>
<path d="M1376 349.14H1583.2" stroke="#8c8c8c" stroke-width="1.600"/>
<path d="M1369 349.14h7" stroke="#8c8c8c" stroke-width="1.600"/>
<text x="1368.5" y="356.94" font-size="19.500" fill="#d8d8d8" text-anchor="end">3</text>
<path d="M1376 406.28H1583.2" stroke="#8c8c8c" stroke-width="1.600"/>
<path d="M1369 406.28h7" stroke="#8c8c8c" stroke-width="1.600"/>
<text x="1368.5" y="414.08" font-size="19.500" fill="#d8d8d8" text-anchor="end">2</text>
<path d="M1376 463.42H1583.2" stroke="#8c8c8c" stroke-width="1.600"/>
<path d="M1369 463.42h7" stroke="#8c8c8c" stroke-width="1.600"/>
<text x="1368.5" y="471.22" font-size="19.500" fill="#d8d8d8" text-anchor="end">1</text>
<path d="M1376 520.56H1583.2" stroke="#8c8c8c" stroke-width="1.600"/>
<path d="M1369 520.56h7" stroke="#8c8c8c" stroke-width="1.600"/>
<text x="1368.5" y="528.36" font-size="19.500" fill="#d8d8d8" text-anchor="end">0</text>
<path d="M1376 577.7H1583.2" stroke="#8c8c8c" stroke-width="1.600"/>
<path d="M1369 577.7h7" stroke="#8c8c8c" stroke-width="1.600"/>
<text x="1368.5" y="585.5" font-size="19.500" fill="#d8d8d8" text-anchor="end">-1</text>
<path d="M1376 634.84H1583.2" stroke="#8c8c8c" stroke-width="1.600"/>
<path d="M1369 634.84h7" stroke="#8c8c8c" stroke-width="1.600"/>
<text x="1368.5" y="642.64" font-size="19.500" fill="#d8d8d8" text-anchor="end">-2</text>
<path d="M1376 691.98H1583.2" stroke="#8c8c8c" stroke-width="1.600"/>
<path d="M1369 691.98h7" stroke="#8c8c8c" stroke-width="1.600"/>
<text x="1368.5" y="699.78" font-size="19.500" fill="#d8d8d8" text-anchor="end">-3</text>
<path d="M1369 749.12h7" stroke="#8c8c8c" stroke-width="1.600"/>
<text x="1368.5" y="756.92" font-size="19.500" fill="#d8d8d8" text-anchor="end">-4</text>
<text x="1466.5" y="285" font-size="19.500" fill="#d8d8d8" text-anchor="middle">Delta H</text>
<path d="M861 520.600H1027" stroke="#111" stroke-width="1.500"/>
<path d="M1395 520.500H1561" stroke="#111" stroke-width="1.500"/>
<defs><linearGradient id="wb" x1="0" y1="0" x2="0" y2="1"><stop offset="0" stop-color="#fff"/><stop offset=".45" stop-color="#fff"/><stop offset="1" stop-color="#7c7c7c"/></linearGradient></defs>
<rect x="1140.500" y="394" width="154.500" height="127" fill="url(#wb)" stroke="#000" stroke-width="1.800"/>
<rect x="1679" y="291" width="866.500" height="666.500" fill="none" stroke="#8c8c8c" stroke-width="1.800"/>
<path d="M1679 957.500v8" stroke="#d0d0d0" stroke-width="1.800"/>
<text x="1679" y="985.500" font-size="19.500" fill="#d8d8d8" text-anchor="middle">0</text>
<path d="M1671.5 957.2h7" stroke="#d0d0d0" stroke-width="1.800"/>
<text x="1670.500" y="964.7" font-size="19.500" fill="#d8d8d8" text-anchor="end">0</text>
<path d="M1751.08 957.500v8" stroke="#d0d0d0" stroke-width="1.800"/>
<text x="1751.08" y="985.500" font-size="19.500" fill="#d8d8d8" text-anchor="middle">0.05</text>
<path d="M1671.5 901.775h7" stroke="#d0d0d0" stroke-width="1.800"/>
<text x="1670.500" y="909.275" font-size="19.500" fill="#d8d8d8" text-anchor="end">0.05</text>
<path d="M1823.15 957.500v8" stroke="#d0d0d0" stroke-width="1.800"/>
<text x="1823.15" y="985.500" font-size="19.500" fill="#d8d8d8" text-anchor="middle">0.1</text>
<path d="M1671.5 846.35h7" stroke="#d0d0d0" stroke-width="1.800"/>
<text x="1670.500" y="853.85" font-size="19.500" fill="#d8d8d8" text-anchor="end">0.1</text>
<path d="M1895.22 957.500v8" stroke="#d0d0d0" stroke-width="1.800"/>
<text x="1895.22" y="985.500" font-size="19.500" fill="#d8d8d8" text-anchor="middle">0.15</text>
<path d="M1671.5 790.925h7" stroke="#d0d0d0" stroke-width="1.800"/>
<text x="1670.500" y="798.425" font-size="19.500" fill="#d8d8d8" text-anchor="end">0.15</text>
<path d="M1967.3 957.500v8" stroke="#d0d0d0" stroke-width="1.800"/>
<text x="1967.3" y="985.500" font-size="19.500" fill="#d8d8d8" text-anchor="middle">0.2</text>
<path d="M1671.5 735.5h7" stroke="#d0d0d0" stroke-width="1.800"/>
<text x="1670.500" y="743" font-size="19.500" fill="#d8d8d8" text-anchor="end">0.2</text>
<path d="M2039.38 957.500v8" stroke="#d0d0d0" stroke-width="1.800"/>
<text x="2039.38" y="985.500" font-size="19.500" fill="#d8d8d8" text-anchor="middle">0.25</text>
<path d="M1671.5 680.075h7" stroke="#d0d0d0" stroke-width="1.800"/>
<text x="1670.500" y="687.575" font-size="19.500" fill="#d8d8d8" text-anchor="end">0.25</text>
<path d="M2111.45 957.500v8" stroke="#d0d0d0" stroke-width="1.800"/>
<text x="2111.45" y="985.500" font-size="19.500" fill="#d8d8d8" text-anchor="middle">0.3</text>
<path d="M1671.5 624.65h7" stroke="#d0d0d0" stroke-width="1.800"/>
<text x="1670.500" y="632.15" font-size="19.500" fill="#d8d8d8" text-anchor="end">0.3</text>
<path d="M2183.53 957.500v8" stroke="#d0d0d0" stroke-width="1.800"/>
<text x="2183.53" y="985.500" font-size="19.500" fill="#d8d8d8" text-anchor="middle">0.35</text>
<path d="M1671.5 569.225h7" stroke="#d0d0d0" stroke-width="1.800"/>
<text x="1670.500" y="576.725" font-size="19.500" fill="#d8d8d8" text-anchor="end">0.35</text>
<path d="M2255.6 957.500v8" stroke="#d0d0d0" stroke-width="1.800"/>
<text x="2255.6" y="985.500" font-size="19.500" fill="#d8d8d8" text-anchor="middle">0.4</text>
<path d="M1671.5 513.8h7" stroke="#d0d0d0" stroke-width="1.800"/>
<text x="1670.500" y="521.3" font-size="19.500" fill="#d8d8d8" text-anchor="end">0.4</text>
<path d="M2327.68 957.500v8" stroke="#d0d0d0" stroke-width="1.800"/>
<text x="2327.68" y="985.500" font-size="19.500" fill="#d8d8d8" text-anchor="middle">0.45</text>
<path d="M1671.5 458.375h7" stroke="#d0d0d0" stroke-width="1.800"/>
<text x="1670.500" y="465.875" font-size="19.500" fill="#d8d8d8" text-anchor="end">0.45</text>
<path d="M2399.75 957.500v8" stroke="#d0d0d0" stroke-width="1.800"/>
<text x="2399.75" y="985.500" font-size="19.500" fill="#d8d8d8" text-anchor="middle">0.5</text>
<path d="M1671.5 402.95h7" stroke="#d0d0d0" stroke-width="1.800"/>
<text x="1670.500" y="410.45" font-size="19.500" fill="#d8d8d8" text-anchor="end">0.5</text>
<path d="M2471.82 957.500v8" stroke="#d0d0d0" stroke-width="1.800"/>
<text x="2471.82" y="985.500" font-size="19.500" fill="#d8d8d8" text-anchor="middle">0.55</text>
<path d="M1671.5 347.525h7" stroke="#d0d0d0" stroke-width="1.800"/>
<text x="1670.500" y="355.025" font-size="19.500" fill="#d8d8d8" text-anchor="end">0.55</text>
<text x="2088.500" y="284" font-size="19.500" fill="#d8d8d8" text-anchor="middle" textLength="115" lengthAdjust="spacingAndGlyphs">CIE 1976 u'v'</text>
<rect x="1849" y="322" width="18" height="18" fill="none" stroke="#fff" stroke-width="2"/>
<rect x="1882" y="354.9" width="18" height="18" fill="none" stroke="#fff" stroke-width="2"/>
<rect x="1935.5" y="343.9" width="18" height="18" fill="none" stroke="#fff" stroke-width="2"/>
<rect x="1963" y="333" width="18" height="18" fill="none" stroke="#fff" stroke-width="2"/>
<rect x="2000" y="338.5" width="18" height="18" fill="none" stroke="#fff" stroke-width="2"/>
<rect x="2042.5" y="347.9" width="18" height="18" fill="none" stroke="#fff" stroke-width="2"/>
<rect x="2101.6" y="353" width="18" height="18" fill="none" stroke="#fff" stroke-width="2"/>
<rect x="1932" y="373.5" width="18" height="18" fill="none" stroke="#fff" stroke-width="2"/>
<rect x="2020.1" y="392" width="18" height="18" fill="none" stroke="#fff" stroke-width="2"/>
<rect x="2005.4" y="401.2" width="18" height="18" fill="none" stroke="#fff" stroke-width="2"/>
<rect x="2127.1" y="410.5" width="18" height="18" fill="none" stroke="#fff" stroke-width="2"/>
<rect x="2209.9" y="394.1" width="18" height="18" fill="none" stroke="#fff" stroke-width="2"/>
<rect x="2319.1" y="366" width="18" height="18" fill="none" stroke="#fff" stroke-width="2"/>
<rect x="1891" y="416" width="18" height="18" fill="none" stroke="#fff" stroke-width="2"/>
<rect x="1869" y="442.1" width="18" height="18" fill="none" stroke="#fff" stroke-width="2"/>
<rect x="1876.5" y="484" width="18" height="18" fill="none" stroke="#fff" stroke-width="2"/>
<rect x="1923" y="480.5" width="18" height="18" fill="none" stroke="#fff" stroke-width="2"/>
<rect x="1950" y="487.9" width="18" height="18" fill="none" stroke="#fff" stroke-width="2"/>
<rect x="2083" y="473" width="18" height="18" fill="none" stroke="#fff" stroke-width="2"/>
<rect x="1997.9" y="512.1" width="18" height="18" fill="none" stroke="#fff" stroke-width="2"/>
<rect x="1926" y="552" width="18" height="18" fill="none" stroke="#fff" stroke-width="2"/>
<rect x="2109" y="580" width="18" height="18" fill="none" stroke="#fff" stroke-width="2"/>
<rect x="1926" y="620.5" width="18" height="18" fill="none" stroke="#fff" stroke-width="2"/>
<rect x="1923.1" y="771.4" width="18" height="18" fill="none" stroke="#fff" stroke-width="2"/>
<rect x="1954" y="427" width="18" height="18" fill="rgba(255,255,255,.55)" stroke="#000" stroke-width="2.400"/>
<circle cx="1854.5" cy="329.5" r="5.400" fill="#00ff00" stroke="#000" stroke-width="1.500"/>
<circle cx="1887.6" cy="366" r="5.400" fill="#4a964a" stroke="#000" stroke-width="1.500"/>
<circle cx="1942.6" cy="355.1" r="5.400" fill="#a0b941" stroke="#000" stroke-width="1.500"/>
<circle cx="1968.6" cy="342.5" r="5.400" fill="#ffff00" stroke="#000" stroke-width="1.500"/>
<circle cx="2005.6" cy="349.6" r="5.400" fill="#eec828" stroke="#000" stroke-width="1.500"/>
<circle cx="2044.6" cy="358.5" r="5.400" fill="#e6a032" stroke="#000" stroke-width="1.500"/>
<circle cx="2099.5" cy="366.1" r="5.400" fill="#de822e" stroke="#000" stroke-width="1.500"/>
<circle cx="1939" cy="388.6" r="5.400" fill="#5a6946" stroke="#000" stroke-width="1.500"/>
<circle cx="2031.5" cy="410.7" r="5.400" fill="#735044" stroke="#000" stroke-width="1.500"/>
<circle cx="2008.9" cy="421.5" r="5.400" fill="#c39687" stroke="#000" stroke-width="1.500"/>
<circle cx="2128.5" cy="434.4" r="5.400" fill="#c15a63" stroke="#000" stroke-width="1.500"/>
<circle cx="2219.5" cy="412.4" r="5.400" fill="#b43241" stroke="#000" stroke-width="1.500"/>
<circle cx="2320.5" cy="380.3" r="5.400" fill="#ff0000" stroke="#000" stroke-width="1.500"/>
<circle cx="1902.6" cy="441.6" r="5.400" fill="#64b9a5" stroke="#000" stroke-width="1.500"/>
<circle cx="1881.6" cy="465.6" r="5.400" fill="#00ffff" stroke="#000" stroke-width="1.500"/>
<circle cx="1891.6" cy="513.4" r="5.400" fill="#0082a0" stroke="#000" stroke-width="1.500"/>
<circle cx="1935.6" cy="511.5" r="5.400" fill="#627aa0" stroke="#000" stroke-width="1.500"/>
<circle cx="1963" cy="517.5" r="5.400" fill="#8780b2" stroke="#000" stroke-width="1.500"/>
<circle cx="2088.5" cy="507.3" r="5.400" fill="#bb5695" stroke="#000" stroke-width="1.500"/>
<circle cx="1994.6" cy="557.4" r="5.400" fill="#5e3c6c" stroke="#000" stroke-width="1.500"/>
<circle cx="1942.5" cy="592.4" r="5.400" fill="#505ba6" stroke="#000" stroke-width="1.500"/>
<circle cx="2115.5" cy="618.4" r="5.400" fill="#ff00ff" stroke="#000" stroke-width="1.500"/>
<circle cx="1946.4" cy="668.6" r="5.400" fill="#383d96" stroke="#000" stroke-width="1.500"/>
<circle cx="1950.6" cy="810.4" r="5.400" fill="#0000ff" stroke="#000" stroke-width="1.500"/>
<circle cx="1965.500" cy="450.300" r="5.400" fill="#c8c8c8" stroke="#000" stroke-width="1.500"/>
<circle cx="1963" cy="450.700" r="5.400" fill="#a0a0a0" stroke="#000" stroke-width="1.500"/>
<circle cx="1948.600" cy="502.500" r="6.200" fill="#000"/>
<rect x="2392.500" y="802" width="17.500" height="17.500" fill="rgba(255,255,255,.5)" stroke="#000" stroke-width="2"/>
<circle cx="2344.500" cy="880.500" r="5.800" fill="#fff" stroke="#000" stroke-width="1.400"/>
<circle cx="2339" cy="886" r="5.800" fill="#bdbdbd" stroke="#000" stroke-width="1.400"/>
<circle cx="2340.500" cy="886.500" r="5.800" fill="#a0a0a0" stroke="#000" stroke-width="1.400"/>
</svg>
<div class="a" style="left:808px;top:766px;width:1602px;height:238px;background:#000;overflow:hidden;width:801.500px">
<div class="a" style="left:24px;top:8px;width:79.500px;height:159px;border:2px solid #ececec;background:linear-gradient(#eceafc 0,#eceafc 50.500%,#ededed 50.500%,#ededed 100%)"></div>
<div class="t" style="left:4px;top:173px;width:120px;text-align:center;font-size:16.500px;color:#fff;transform:scaleX(.985);transform-origin:50% 0">White</div>
<div class="a" style="left:116.05px;top:8px;width:79.500px;height:159px;border:2px solid #ececec;background:linear-gradient(#e6e4f8 0,#e6e4f8 50.500%,#e5e5e5 50.500%,#e5e5e5 100%)"></div>
<div class="t" style="left:96.05px;top:173px;width:120px;text-align:center;font-size:16.500px;color:#fff;transform:scaleX(.985);transform-origin:50% 0">Gray 80</div>
<div class="a" style="left:208.1px;top:8px;width:79.500px;height:159px;border:2px solid #ececec;background:linear-gradient(#d2d0e2 0,#d2d0e2 50.500%,#d0d0d0 50.500%,#d0d0d0 100%)"></div>
<div class="t" style="left:188.1px;top:173px;width:120px;text-align:center;font-size:16.500px;color:#fff;transform:scaleX(.985);transform-origin:50% 0">Gray 65</div>
<div class="a" style="left:300.15px;top:8px;width:79.500px;height:159px;border:2px solid #ececec;background:linear-gradient(#bebacc 0,#bebacc 50.500%,#bababa 50.500%,#bababa 100%)"></div>
<div class="t" style="left:280.15px;top:173px;width:120px;text-align:center;font-size:16.500px;color:#fff;transform:scaleX(.985);transform-origin:50% 0">Gray 50</div>
<div class="a" style="left:392.2px;top:8px;width:79.500px;height:159px;border:2px solid #ececec;background:linear-gradient(#a29eb0 0,#a29eb0 50.500%,#a0a0a0 50.500%,#a0a0a0 100%)"></div>
<div class="t" style="left:372.2px;top:173px;width:120px;text-align:center;font-size:16.500px;color:#fff;transform:scaleX(.985);transform-origin:50% 0">Gray 35</div>
<div class="a" style="left:484.25px;top:8px;width:79.500px;height:159px;border:2px solid #ececec;background:linear-gradient(#030305 0,#030305 50.500%,#000000 50.500%,#000000 100%)"></div>
<div class="t" style="left:464.25px;top:173px;width:120px;text-align:center;font-size:16.500px;color:#fff;transform:scaleX(.985);transform-origin:50% 0">Black</div>
<div class="a" style="left:576.3px;top:8px;width:79.500px;height:159px;border:2px solid #ececec;background:linear-gradient(#755348 0,#755348 50.500%,#735244 50.500%,#735244 100%)"></div>
<div class="t" style="left:556.3px;top:173px;width:120px;text-align:center;font-size:16.500px;color:#fff;transform:scaleX(.985);transform-origin:50% 0">Dark Skin</div>
<div class="a" style="left:668.35px;top:8px;width:79.500px;height:159px;border:2px solid #ececec;background:linear-gradient(#c89890 0,#c89890 50.500%,#c49682 50.500%,#c49682 100%)"></div>
<div class="t" style="left:648.35px;top:173px;width:120px;text-align:center;font-size:16.500px;color:#fff;transform:scaleX(.985);transform-origin:50% 0">Light Skin</div>
<div class="a" style="left:760.4px;top:8px;width:79.500px;height:159px;border:2px solid #ececec;background:linear-gradient(#627cb0 0,#627cb0 50.500%,#607aa0 50.500%,#607aa0 100%)"></div>
<div class="t" style="left:740.4px;top:173px;width:120px;text-align:center;font-size:16.500px;color:#fff;transform:scaleX(.985);transform-origin:50% 0">Blue Sky</div>
<div class="t" style="left:4px;top:66px;font-size:15.500px;color:#fff;transform:rotate(-90deg);transform-origin:0 0">Actual</div>
<div class="t" style="left:4px;top:156px;font-size:15.500px;color:#fff;transform:rotate(-90deg);transform-origin:0 0">Target</div>
<div class="a" style="left:0;top:217px;width:801.500px;height:21px;background:#616161;border-radius:3px"></div>
<div class="a" style="left:24px;top:218px;width:215px;height:19px;background:#464646;border-radius:10px"></div>
<div class="a" style="left:2.300px;top:219px;width:17.700px;height:17.700px;background:#828282;border:1px solid #969696;border-radius:4px"></div>
<div class="a" style="left:781px;top:219px;width:17.700px;height:17.700px;background:#828282;border:1px solid #969696;border-radius:4px"></div>
<svg width="802" height="238" viewBox="0 0 802 238"><path d="M15.500 220.500v14.500l-8.500-7.250z" fill="#444"/><path d="M785.500 220.500v14.500l8.500-7.250z" fill="#444"/></svg>
</div>
<div class="t" style="left:369.4px;top:1015.6px;font-size:37.6px;transform:scaleX(1.0551);color:#f4f4f4;">Avg dE2000: 4.34</div>
<div class="t" style="left:364.8px;top:1071.3px;font-size:37.6px;transform:scaleX(1.0642);color:#f4f4f4;">Max dE2000: 9.71</div>
<div class="t" style="left:321.3px;top:1136.2px;font-size:37.6px;transform:scaleX(1.0689);color:#f4f4f4;">Current Reading</div>
<div class="t" style="left:320.6px;top:1189.5px;font-size:30.8px;transform:scaleX(1.0888);color:#f4f4f4;">x: 0.3019</div>
<div class="t" style="left:532.6px;top:1189.5px;font-size:30.8px;transform:scaleX(1.0975);color:#f4f4f4;">y: 0.3086</div>
<div class="t" style="left:320.6px;top:1245.2px;font-size:30.8px;transform:scaleX(1.0877);color:#f4f4f4;">fL: 129.01</div>
<div class="t" style="left:321.3px;top:1291.0px;font-size:30.8px;transform:scaleX(1.1341);color:#f4f4f4;">cd/m&#178;: 442.03</div>
<div class="a" style="left:734.500px;top:1023.500px;width:1825.500px;height:307.500px;background:#262626;overflow:hidden;border-left:2px solid #181818;border-top:2px solid #181818"><div class="a" style="left:-736.5px;top:-1025.5px;width:0;height:0">
<div class="a" style="left:736.500px;top:1025.500px;width:1825px;height:33.200px;background:linear-gradient(#363636 0,#2a2a2a 48%,#131313 50%,#1c1c1c 100%)"></div>
<div class="a" style="left:736.500px;top:1058.7px;width:1825px;height:31.700px;background:#424242"></div>
<div class="a" style="left:736.500px;top:1090.25px;width:1825px;height:31.700px;background:#808080"></div>
<div class="a" style="left:736.500px;top:1121.8px;width:1825px;height:31.700px;background:#424242"></div>
<div class="a" style="left:736.500px;top:1153.35px;width:1825px;height:31.700px;background:#808080"></div>
<div class="a" style="left:736.500px;top:1184.9px;width:1825px;height:31.700px;background:#424242"></div>
<div class="a" style="left:736.500px;top:1216.45px;width:1825px;height:31.700px;background:#808080"></div>
<div class="a" style="left:736.500px;top:1248px;width:1825px;height:31.700px;background:#424242"></div>
<div class="a" style="left:736.500px;top:1279.55px;width:1825px;height:31.700px;background:#808080"></div>
<div class="t" style="left:968.4px;top:1034.3px;font-size:17.3px;transform:scaleX(1.4284);color:#f2f2f2;">White</div>
<div class="t" style="left:1052.5px;top:1034.3px;font-size:17.3px;transform:scaleX(1.3129);color:#f2f2f2;">Gray 80</div>
<div class="t" style="left:1148.3px;top:1034.3px;font-size:17.3px;transform:scaleX(1.3129);color:#f2f2f2;">Gray 65</div>
<div class="t" style="left:1244.2px;top:1034.3px;font-size:17.3px;transform:scaleX(1.3129);color:#f2f2f2;">Gray 50</div>
<div class="t" style="left:1340.1px;top:1034.3px;font-size:17.3px;transform:scaleX(1.3129);color:#f2f2f2;">Gray 35</div>
<div class="t" style="left:1439.1px;top:1034.3px;font-size:17.3px;transform:scaleX(1.3084);color:#f2f2f2;">Black</div>
<div class="t" style="left:1511.8px;top:1034.3px;font-size:17.3px;transform:scaleX(1.3201);color:#f2f2f2;">Dark Skin</div>
<div class="t" style="left:1625.4px;top:1034.3px;font-size:17.3px;transform:scaleX(1.3396);color:#f2f2f2;">Light Skin</div>
<div class="t" style="left:1741.7px;top:1034.3px;font-size:17.3px;transform:scaleX(1.3032);color:#f2f2f2;">Blue Sky</div>
<div class="t" style="left:1844.4px;top:1034.3px;font-size:17.3px;transform:scaleX(1.3288);color:#f2f2f2;">Foliage</div>
<div class="t" style="left:1934.3px;top:1034.3px;font-size:17.3px;transform:scaleX(1.3728);color:#f2f2f2;">Blue Flower</div>
<div class="t" style="left:2074.3px;top:1034.3px;font-size:17.3px;transform:scaleX(1.3541);color:#f2f2f2;">Bluish Green</div>
<div class="t" style="left:2224.2px;top:1034.3px;font-size:17.3px;transform:scaleX(1.3381);color:#f2f2f2;">Orange</div>
<div class="t" style="left:2316.0px;top:1034.3px;font-size:17.3px;transform:scaleX(1.3734);color:#f2f2f2;">Purplish Blue</div>
<div class="t" style="left:2470.5px;top:1034.3px;font-size:17.3px;transform:scaleX(1.5688);color:#f2f2f2;">Moderate Red</div>
<div class="t" style="left:756.9px;top:1067.8px;font-size:17.3px;transform:scaleX(1.4087);color:#f2f2f2;font-weight:bold;">x: CIE31</div>
<div class="t" style="left:961.5px;top:1067.6px;font-size:17.6px;transform:scaleX(1.4400);color:#f2f2f2;">0.30</div>
<div class="t" style="left:1052.5px;top:1067.6px;font-size:17.6px;transform:scaleX(1.4400);color:#f2f2f2;">0.30</div>
<div class="t" style="left:1148.3px;top:1067.6px;font-size:17.6px;transform:scaleX(1.4400);color:#f2f2f2;">0.30</div>
<div class="t" style="left:1244.2px;top:1067.6px;font-size:17.6px;transform:scaleX(1.4400);color:#f2f2f2;">0.30</div>
<div class="t" style="left:1340.1px;top:1067.6px;font-size:17.6px;transform:scaleX(1.4400);color:#f2f2f2;">0.30</div>
<div class="t" style="left:1435.8px;top:1067.6px;font-size:17.6px;transform:scaleX(1.4400);color:#f2f2f2;">0.26</div>
<div class="t" style="left:1511.8px;top:1067.6px;font-size:17.6px;transform:scaleX(1.4400);color:#f2f2f2;">0.39</div>
<div class="t" style="left:1625.4px;top:1067.6px;font-size:17.6px;transform:scaleX(1.4400);color:#f2f2f2;">0.36</div>
<div class="t" style="left:1741.7px;top:1067.6px;font-size:17.6px;transform:scaleX(1.4400);color:#f2f2f2;">0.24</div>
<div class="t" style="left:1844.4px;top:1067.6px;font-size:17.6px;transform:scaleX(1.4400);color:#f2f2f2;">0.33</div>
<div class="t" style="left:1934.3px;top:1067.6px;font-size:17.6px;transform:scaleX(1.4400);color:#f2f2f2;">0.26</div>
<div class="t" style="left:2074.3px;top:1067.6px;font-size:17.6px;transform:scaleX(1.4400);color:#f2f2f2;">0.25</div>
<div class="t" style="left:2224.2px;top:1067.6px;font-size:17.6px;transform:scaleX(1.4400);color:#f2f2f2;">0.50</div>
<div class="t" style="left:2316.0px;top:1067.6px;font-size:17.6px;transform:scaleX(1.4400);color:#f2f2f2;">0.21</div>
<div class="t" style="left:2470.5px;top:1067.6px;font-size:17.6px;transform:scaleX(1.4400);color:#f2f2f2;">0.44</div>
<div class="t" style="left:756.9px;top:1099.3px;font-size:17.3px;transform:scaleX(1.4087);color:#f2f2f2;font-weight:bold;">y: CIE31</div>
<div class="t" style="left:961.5px;top:1099.2px;font-size:17.6px;transform:scaleX(1.4400);color:#f2f2f2;">0.31</div>
<div class="t" style="left:1052.5px;top:1099.2px;font-size:17.6px;transform:scaleX(1.4400);color:#f2f2f2;">0.31</div>
<div class="t" style="left:1148.3px;top:1099.2px;font-size:17.6px;transform:scaleX(1.4400);color:#f2f2f2;">0.31</div>
<div class="t" style="left:1244.2px;top:1099.2px;font-size:17.6px;transform:scaleX(1.4400);color:#f2f2f2;">0.31</div>
<div class="t" style="left:1340.1px;top:1099.2px;font-size:17.6px;transform:scaleX(1.4400);color:#f2f2f2;">0.31</div>
<div class="t" style="left:1435.8px;top:1099.2px;font-size:17.6px;transform:scaleX(1.4400);color:#f2f2f2;">0.25</div>
<div class="t" style="left:1511.8px;top:1099.2px;font-size:17.6px;transform:scaleX(1.4400);color:#f2f2f2;">0.35</div>
<div class="t" style="left:1625.4px;top:1099.2px;font-size:17.6px;transform:scaleX(1.4400);color:#f2f2f2;">0.34</div>
<div class="t" style="left:1741.7px;top:1099.2px;font-size:17.6px;transform:scaleX(1.4400);color:#f2f2f2;">0.24</div>
<div class="t" style="left:1844.4px;top:1099.2px;font-size:17.6px;transform:scaleX(1.4400);color:#f2f2f2;">0.42</div>
<div class="t" style="left:1934.3px;top:1099.2px;font-size:17.6px;transform:scaleX(1.4400);color:#f2f2f2;">0.23</div>
<div class="t" style="left:2074.3px;top:1099.2px;font-size:17.6px;transform:scaleX(1.4400);color:#f2f2f2;">0.34</div>
<div class="t" style="left:2224.2px;top:1099.2px;font-size:17.6px;transform:scaleX(1.4400);color:#f2f2f2;">0.41</div>
<div class="t" style="left:2316.0px;top:1099.2px;font-size:17.6px;transform:scaleX(1.4400);color:#f2f2f2;">0.17</div>
<div class="t" style="left:2470.5px;top:1099.2px;font-size:17.6px;transform:scaleX(1.4400);color:#f2f2f2;">0.30</div>
<div class="t" style="left:756.9px;top:1130.8px;font-size:17.3px;transform:scaleX(1.4202);color:#f2f2f2;font-weight:bold;">Y</div>
<div class="t" style="left:961.5px;top:1130.7px;font-size:17.6px;transform:scaleX(1.4400);color:#f2f2f2;">442.03</div>
<div class="t" style="left:1052.5px;top:1130.7px;font-size:17.6px;transform:scaleX(1.4400);color:#f2f2f2;">357.65</div>
<div class="t" style="left:1148.3px;top:1130.7px;font-size:17.6px;transform:scaleX(1.4400);color:#f2f2f2;">286.49</div>
<div class="t" style="left:1244.2px;top:1130.7px;font-size:17.6px;transform:scaleX(1.4400);color:#f2f2f2;">223.20</div>
<div class="t" style="left:1340.1px;top:1130.7px;font-size:17.6px;transform:scaleX(1.4400);color:#f2f2f2;">159.81</div>
<div class="t" style="left:1435.8px;top:1130.7px;font-size:17.6px;transform:scaleX(1.4400);color:#f2f2f2;">0.28</div>
<div class="t" style="left:1511.8px;top:1130.7px;font-size:17.6px;transform:scaleX(1.4400);color:#f2f2f2;">46.19</div>
<div class="t" style="left:1625.4px;top:1130.7px;font-size:17.6px;transform:scaleX(1.4400);color:#f2f2f2;">161.81</div>
<div class="t" style="left:1741.7px;top:1130.7px;font-size:17.6px;transform:scaleX(1.4400);color:#f2f2f2;">87.12</div>
<div class="t" style="left:1844.4px;top:1130.7px;font-size:17.6px;transform:scaleX(1.4400);color:#f2f2f2;">60.52</div>
<div class="t" style="left:1934.3px;top:1130.7px;font-size:17.6px;transform:scaleX(1.4400);color:#f2f2f2;">108.70</div>
<div class="t" style="left:2074.3px;top:1130.7px;font-size:17.6px;transform:scaleX(1.4400);color:#f2f2f2;">190.23</div>
<div class="t" style="left:2224.2px;top:1130.7px;font-size:17.6px;transform:scaleX(1.4400);color:#f2f2f2;">130.03</div>
<div class="t" style="left:2316.0px;top:1130.7px;font-size:17.6px;transform:scaleX(1.4400);color:#f2f2f2;">53.24</div>
<div class="t" style="left:2470.5px;top:1130.7px;font-size:17.6px;transform:scaleX(1.4400);color:#f2f2f2;">84.45</div>
<div class="t" style="left:756.9px;top:1162.4px;font-size:17.3px;transform:scaleX(1.4560);color:#f2f2f2;font-weight:bold;">Target x:CIE31</div>
<div class="t" style="left:961.5px;top:1162.3px;font-size:17.6px;transform:scaleX(1.4400);color:#f2f2f2;">0.31</div>
<div class="t" style="left:1052.5px;top:1162.3px;font-size:17.6px;transform:scaleX(1.4400);color:#f2f2f2;">0.31</div>
<div class="t" style="left:1148.3px;top:1162.3px;font-size:17.6px;transform:scaleX(1.4400);color:#f2f2f2;">0.31</div>
<div class="t" style="left:1244.2px;top:1162.3px;font-size:17.6px;transform:scaleX(1.4400);color:#f2f2f2;">0.31</div>
<div class="t" style="left:1340.1px;top:1162.3px;font-size:17.6px;transform:scaleX(1.4400);color:#f2f2f2;">0.31</div>
<div class="t" style="left:1435.8px;top:1162.3px;font-size:17.6px;transform:scaleX(1.4400);color:#f2f2f2;">0.31</div>
<div class="t" style="left:1511.8px;top:1162.3px;font-size:17.6px;transform:scaleX(1.4400);color:#f2f2f2;">0.40</div>
<div class="t" style="left:1625.4px;top:1162.3px;font-size:17.6px;transform:scaleX(1.4400);color:#f2f2f2;">0.38</div>
<div class="t" style="left:1741.7px;top:1162.3px;font-size:17.6px;transform:scaleX(1.4400);color:#f2f2f2;">0.25</div>
<div class="t" style="left:1844.4px;top:1162.3px;font-size:17.6px;transform:scaleX(1.4400);color:#f2f2f2;">0.34</div>
<div class="t" style="left:1934.3px;top:1162.3px;font-size:17.6px;transform:scaleX(1.4400);color:#f2f2f2;">0.27</div>
<div class="t" style="left:2074.3px;top:1162.3px;font-size:17.6px;transform:scaleX(1.4400);color:#f2f2f2;">0.26</div>
<div class="t" style="left:2224.2px;top:1162.3px;font-size:17.6px;transform:scaleX(1.4400);color:#f2f2f2;">0.51</div>
<div class="t" style="left:2316.0px;top:1162.3px;font-size:17.6px;transform:scaleX(1.4400);color:#f2f2f2;">0.22</div>
<div class="t" style="left:2470.5px;top:1162.3px;font-size:17.6px;transform:scaleX(1.4400);color:#f2f2f2;">0.46</div>
<div class="t" style="left:756.9px;top:1194.0px;font-size:17.3px;transform:scaleX(1.4560);color:#f2f2f2;font-weight:bold;">Target y:CIE31</div>
<div class="t" style="left:961.5px;top:1193.8px;font-size:17.6px;transform:scaleX(1.4400);color:#f2f2f2;">0.33</div>
<div class="t" style="left:1052.5px;top:1193.8px;font-size:17.6px;transform:scaleX(1.4400);color:#f2f2f2;">0.33</div>
<div class="t" style="left:1148.3px;top:1193.8px;font-size:17.6px;transform:scaleX(1.4400);color:#f2f2f2;">0.33</div>
<div class="t" style="left:1244.2px;top:1193.8px;font-size:17.6px;transform:scaleX(1.4400);color:#f2f2f2;">0.33</div>
<div class="t" style="left:1340.1px;top:1193.8px;font-size:17.6px;transform:scaleX(1.4400);color:#f2f2f2;">0.33</div>
<div class="t" style="left:1435.8px;top:1193.8px;font-size:17.6px;transform:scaleX(1.4400);color:#f2f2f2;">0.33</div>
<div class="t" style="left:1511.8px;top:1193.8px;font-size:17.6px;transform:scaleX(1.4400);color:#f2f2f2;">0.36</div>
<div class="t" style="left:1625.4px;top:1193.8px;font-size:17.6px;transform:scaleX(1.4400);color:#f2f2f2;">0.36</div>
<div class="t" style="left:1741.7px;top:1193.8px;font-size:17.6px;transform:scaleX(1.4400);color:#f2f2f2;">0.27</div>
<div class="t" style="left:1844.4px;top:1193.8px;font-size:17.6px;transform:scaleX(1.4400);color:#f2f2f2;">0.43</div>
<div class="t" style="left:1934.3px;top:1193.8px;font-size:17.6px;transform:scaleX(1.4400);color:#f2f2f2;">0.25</div>
<div class="t" style="left:2074.3px;top:1193.8px;font-size:17.6px;transform:scaleX(1.4400);color:#f2f2f2;">0.36</div>
<div class="t" style="left:2224.2px;top:1193.8px;font-size:17.6px;transform:scaleX(1.4400);color:#f2f2f2;">0.41</div>
<div class="t" style="left:2316.0px;top:1193.8px;font-size:17.6px;transform:scaleX(1.4400);color:#f2f2f2;">0.19</div>
<div class="t" style="left:2470.5px;top:1193.8px;font-size:17.6px;transform:scaleX(1.4400);color:#f2f2f2;">0.31</div>
<div class="t" style="left:756.9px;top:1225.5px;font-size:17.3px;transform:scaleX(1.4917);color:#f2f2f2;font-weight:bold;">Target Y</div>
<div class="t" style="left:961.5px;top:1225.4px;font-size:17.6px;transform:scaleX(1.4400);color:#f2f2f2;">442.03</div>
<div class="t" style="left:1052.5px;top:1225.4px;font-size:17.6px;transform:scaleX(1.4400);color:#f2f2f2;">349.78</div>
<div class="t" style="left:1148.3px;top:1225.4px;font-size:17.6px;transform:scaleX(1.4400);color:#f2f2f2;">281.84</div>
<div class="t" style="left:1244.2px;top:1225.4px;font-size:17.6px;transform:scaleX(1.4400);color:#f2f2f2;">217.05</div>
<div class="t" style="left:1340.1px;top:1225.4px;font-size:17.6px;transform:scaleX(1.4400);color:#f2f2f2;">151.14</div>
<div class="t" style="left:1435.8px;top:1225.4px;font-size:17.6px;transform:scaleX(1.4400);color:#f2f2f2;">0.00</div>
<div class="t" style="left:1511.8px;top:1225.4px;font-size:17.6px;transform:scaleX(1.4400);color:#f2f2f2;">44.53</div>
<div class="t" style="left:1625.4px;top:1225.4px;font-size:17.6px;transform:scaleX(1.4400);color:#f2f2f2;">154.25</div>
<div class="t" style="left:1741.7px;top:1225.4px;font-size:17.6px;transform:scaleX(1.4400);color:#f2f2f2;">82.65</div>
<div class="t" style="left:1844.4px;top:1225.4px;font-size:17.6px;transform:scaleX(1.4400);color:#f2f2f2;">57.61</div>
<div class="t" style="left:1934.3px;top:1225.4px;font-size:17.6px;transform:scaleX(1.4400);color:#f2f2f2;">103.07</div>
<div class="t" style="left:2074.3px;top:1225.4px;font-size:17.6px;transform:scaleX(1.4400);color:#f2f2f2;">185.09</div>
<div class="t" style="left:2224.2px;top:1225.4px;font-size:17.6px;transform:scaleX(1.4400);color:#f2f2f2;">125.31</div>
<div class="t" style="left:2316.0px;top:1225.4px;font-size:17.6px;transform:scaleX(1.4400);color:#f2f2f2;">51.96</div>
<div class="t" style="left:2470.5px;top:1225.4px;font-size:17.6px;transform:scaleX(1.4400);color:#f2f2f2;">82.55</div>
<div class="t" style="left:756.9px;top:1257.0px;font-size:17.3px;transform:scaleX(1.4720);color:#f2f2f2;font-weight:bold;">&#916;E 2000</div>
<div class="t" style="left:961.5px;top:1256.9px;font-size:17.6px;transform:scaleX(1.4400);color:#f2f2f2;">9.71</div>
<div class="t" style="left:1052.5px;top:1256.9px;font-size:17.6px;transform:scaleX(1.4400);color:#f2f2f2;">9.59</div>
<div class="t" style="left:1148.3px;top:1256.9px;font-size:17.6px;transform:scaleX(1.4400);color:#f2f2f2;">9.16</div>
<div class="t" style="left:1244.2px;top:1256.9px;font-size:17.6px;transform:scaleX(1.4400);color:#f2f2f2;">8.62</div>
<div class="t" style="left:1340.1px;top:1256.9px;font-size:17.6px;transform:scaleX(1.4400);color:#f2f2f2;">7.92</div>
<div class="t" style="left:1435.8px;top:1256.9px;font-size:17.6px;transform:scaleX(1.4400);color:#f2f2f2;">0.92</div>
<div class="t" style="left:1511.8px;top:1256.9px;font-size:17.6px;transform:scaleX(1.4400);color:#f2f2f2;">3.46</div>
<div class="t" style="left:1625.4px;top:1256.9px;font-size:17.6px;transform:scaleX(1.4400);color:#f2f2f2;">5.39</div>
<div class="t" style="left:1741.7px;top:1256.9px;font-size:17.6px;transform:scaleX(1.4400);color:#f2f2f2;">4.00</div>
<div class="t" style="left:1844.4px;top:1256.9px;font-size:17.6px;transform:scaleX(1.4400);color:#f2f2f2;">1.72</div>
<div class="t" style="left:1934.3px;top:1256.9px;font-size:17.6px;transform:scaleX(1.4400);color:#f2f2f2;">4.02</div>
<div class="t" style="left:2074.3px;top:1256.9px;font-size:17.6px;transform:scaleX(1.4400);color:#f2f2f2;">6.21</div>
<div class="t" style="left:2224.2px;top:1256.9px;font-size:17.6px;transform:scaleX(1.4400);color:#f2f2f2;">1.24</div>
<div class="t" style="left:2316.0px;top:1256.9px;font-size:17.6px;transform:scaleX(1.4400);color:#f2f2f2;">3.69</div>
<div class="t" style="left:2470.5px;top:1256.9px;font-size:17.6px;transform:scaleX(1.4400);color:#f2f2f2;">4.00</div>
<div class="t" style="left:756.9px;top:1288.6px;font-size:17.3px;transform:scaleX(1.4182);color:#f2f2f2;font-weight:bold;">&#916;E ITP</div>
<div class="t" style="left:961.5px;top:1288.5px;font-size:17.6px;transform:scaleX(1.4400);color:#f2f2f2;">8.72</div>
<div class="t" style="left:1052.5px;top:1288.5px;font-size:17.6px;transform:scaleX(1.4400);color:#f2f2f2;">9.46</div>
<div class="t" style="left:1148.3px;top:1288.5px;font-size:17.6px;transform:scaleX(1.4400);color:#f2f2f2;">9.44</div>
<div class="t" style="left:1244.2px;top:1288.5px;font-size:17.6px;transform:scaleX(1.4400);color:#f2f2f2;">9.57</div>
<div class="t" style="left:1340.1px;top:1288.5px;font-size:17.6px;transform:scaleX(1.4400);color:#f2f2f2;">10.10</div>
<div class="t" style="left:1435.8px;top:1288.5px;font-size:17.6px;transform:scaleX(1.4400);color:#f2f2f2;">69.78</div>
<div class="t" style="left:1511.8px;top:1288.5px;font-size:17.6px;transform:scaleX(1.4400);color:#f2f2f2;">7.08</div>
<div class="t" style="left:1625.4px;top:1288.5px;font-size:17.6px;transform:scaleX(1.4400);color:#f2f2f2;">10.51</div>
<div class="t" style="left:1741.7px;top:1288.5px;font-size:17.6px;transform:scaleX(1.4400);color:#f2f2f2;">10.52</div>
<div class="t" style="left:1844.4px;top:1288.5px;font-size:17.6px;transform:scaleX(1.4400);color:#f2f2f2;">6.05</div>
<div class="t" style="left:1934.3px;top:1288.5px;font-size:17.6px;transform:scaleX(1.4400);color:#f2f2f2;">10.08</div>
<div class="t" style="left:2074.3px;top:1288.5px;font-size:17.6px;transform:scaleX(1.4400);color:#f2f2f2;">9.74</div>
<div class="t" style="left:2224.2px;top:1288.5px;font-size:17.6px;transform:scaleX(1.4400);color:#f2f2f2;">7.42</div>
<div class="t" style="left:2316.0px;top:1288.5px;font-size:17.6px;transform:scaleX(1.4400);color:#f2f2f2;">11.35</div>
<div class="t" style="left:2470.5px;top:1288.5px;font-size:17.6px;transform:scaleX(1.4400);color:#f2f2f2;">10.51</div>
<div class="a" style="left:736.500px;top:1311px;width:1825px;height:20px;background:#616161"></div>
<div class="a" style="left:765px;top:1312px;width:873px;height:18px;background:#464646;border-radius:9px"></div>
<div class="a" style="left:739.300px;top:1313px;width:21.600px;height:16px;background:#767676;border:1px solid #8c8c8c;border-radius:4px"></div>
<div class="a" style="left:2534.500px;top:1313px;width:21.600px;height:16px;background:#767676;border:1px solid #8c8c8c;border-radius:4px"></div>
<svg width="2560" height="1528" viewBox="0 0 2560 1528"><path d="M754.200 1314.500v13.500l-8.500-6.750z" fill="#3e3e3e"/><path d="M2541.500 1314.500v13.500l8.500-6.750z" fill="#3e3e3e"/></svg>
</div></div>
<div class="a" style="left:300px;top:1433px;width:1776px;height:95px;overflow:hidden">
<div class="a" style="left:2px;top:2px;width:74px;height:73px;border-radius:8px;background:linear-gradient(#1a1a1a,#3a3a3a);"></div>
<div class="a" style="left:9px;top:9px;width:60px;height:37px;border-radius:6px;background:#ffffff;box-shadow:inset 2px 2px 2px rgba(0,0,0,.28),inset -1px -1px 1px rgba(255,255,255,.12)"></div>
<div class="t" style="left:-21px;top:55.5px;width:120px;text-align:center;font-size:16px;font-weight:bold;color:#fff;transform:scaleX(.95);transform-origin:50% 0">White</div>
<div class="a" style="left:80px;top:2px;width:74px;height:73px;border-radius:8px;background:linear-gradient(#a2a2a2,#6e6e6e);box-shadow:inset 0 0 0 1px #8c8c8c"></div>
<div class="a" style="left:87px;top:9px;width:60px;height:37px;border-radius:6px;background:#e6e6e6;box-shadow:inset 2px 2px 2px rgba(0,0,0,.28),inset -1px -1px 1px rgba(255,255,255,.12)"></div>
<div class="t" style="left:57px;top:55.5px;width:120px;text-align:center;font-size:16px;font-weight:bold;color:#2a2a2a;transform:scaleX(.95);transform-origin:50% 0">Gray 80</div>
<div class="a" style="left:158px;top:2px;width:74px;height:73px;border-radius:8px;background:linear-gradient(#a2a2a2,#6e6e6e);box-shadow:inset 0 0 0 1px #8c8c8c"></div>
<div class="a" style="left:165px;top:9px;width:60px;height:37px;border-radius:6px;background:#d1d1d1;box-shadow:inset 2px 2px 2px rgba(0,0,0,.28),inset -1px -1px 1px rgba(255,255,255,.12)"></div>
<div class="t" style="left:135px;top:55.5px;width:120px;text-align:center;font-size:16px;font-weight:bold;color:#2a2a2a;transform:scaleX(.95);transform-origin:50% 0">Gray 65</div>
<div class="a" style="left:236px;top:2px;width:74px;height:73px;border-radius:8px;background:linear-gradient(#a2a2a2,#6e6e6e);box-shadow:inset 0 0 0 1px #8c8c8c"></div>
<div class="a" style="left:243px;top:9px;width:60px;height:37px;border-radius:6px;background:#bababa;box-shadow:inset 2px 2px 2px rgba(0,0,0,.28),inset -1px -1px 1px rgba(255,255,255,.12)"></div>
<div class="t" style="left:213px;top:55.5px;width:120px;text-align:center;font-size:16px;font-weight:bold;color:#2a2a2a;transform:scaleX(.95);transform-origin:50% 0">Gray 50</div>
<div class="a" style="left:314px;top:2px;width:74px;height:73px;border-radius:8px;background:linear-gradient(#a2a2a2,#6e6e6e);box-shadow:inset 0 0 0 1px #8c8c8c"></div>
<div class="a" style="left:321px;top:9px;width:60px;height:37px;border-radius:6px;background:#a0a0a0;box-shadow:inset 2px 2px 2px rgba(0,0,0,.28),inset -1px -1px 1px rgba(255,255,255,.12)"></div>
<div class="t" style="left:291px;top:55.5px;width:120px;text-align:center;font-size:16px;font-weight:bold;color:#2a2a2a;transform:scaleX(.95);transform-origin:50% 0">Gray 35</div>
<div class="a" style="left:392px;top:2px;width:74px;height:73px;border-radius:8px;background:linear-gradient(#a2a2a2,#6e6e6e);box-shadow:inset 0 0 0 1px #8c8c8c"></div>
<div class="a" style="left:399px;top:9px;width:60px;height:37px;border-radius:6px;background:#000000;box-shadow:inset 2px 2px 2px rgba(0,0,0,.28),inset -1px -1px 1px rgba(255,255,255,.12)"></div>
<div class="t" style="left:369px;top:55.5px;width:120px;text-align:center;font-size:16px;font-weight:bold;color:#2a2a2a;transform:scaleX(.95);transform-origin:50% 0">Black</div>
<div class="a" style="left:470px;top:2px;width:74px;height:73px;border-radius:8px;background:linear-gradient(#a2a2a2,#6e6e6e);box-shadow:inset 0 0 0 1px #8c8c8c"></div>
<div class="a" style="left:477px;top:9px;width:60px;height:37px;border-radius:6px;background:#735244;box-shadow:inset 2px 2px 2px rgba(0,0,0,.28),inset -1px -1px 1px rgba(255,255,255,.12)"></div>
<div class="t" style="left:447px;top:55.5px;width:120px;text-align:center;font-size:16px;font-weight:bold;color:#2a2a2a;transform:scaleX(.95);transform-origin:50% 0">Dark Skin</div>
<div class="a" style="left:548px;top:2px;width:74px;height:73px;border-radius:8px;background:linear-gradient(#a2a2a2,#6e6e6e);box-shadow:inset 0 0 0 1px #8c8c8c"></div>
<div class="a" style="left:555px;top:9px;width:60px;height:37px;border-radius:6px;background:#c49682;box-shadow:inset 2px 2px 2px rgba(0,0,0,.28),inset -1px -1px 1px rgba(255,255,255,.12)"></div>
<div class="t" style="left:525px;top:55.5px;width:120px;text-align:center;font-size:16px;font-weight:bold;color:#2a2a2a;transform:scaleX(.95);transform-origin:50% 0">Light Skin</div>
<div class="a" style="left:626px;top:2px;width:74px;height:73px;border-radius:8px;background:linear-gradient(#a2a2a2,#6e6e6e);box-shadow:inset 0 0 0 1px #8c8c8c"></div>
<div class="a" style="left:633px;top:9px;width:60px;height:37px;border-radius:6px;background:#607aa0;box-shadow:inset 2px 2px 2px rgba(0,0,0,.28),inset -1px -1px 1px rgba(255,255,255,.12)"></div>
<div class="t" style="left:603px;top:55.5px;width:120px;text-align:center;font-size:16px;font-weight:bold;color:#2a2a2a;transform:scaleX(.95);transform-origin:50% 0">Blue Sky</div>
<div class="a" style="left:704px;top:2px;width:74px;height:73px;border-radius:8px;background:linear-gradient(#a2a2a2,#6e6e6e);box-shadow:inset 0 0 0 1px #8c8c8c"></div>
<div class="a" style="left:711px;top:9px;width:60px;height:37px;border-radius:6px;background:#586c42;box-shadow:inset 2px 2px 2px rgba(0,0,0,.28),inset -1px -1px 1px rgba(255,255,255,.12)"></div>
<div class="t" style="left:681px;top:55.5px;width:120px;text-align:center;font-size:16px;font-weight:bold;color:#2a2a2a;transform:scaleX(.95);transform-origin:50% 0">Foliage</div>
<div class="a" style="left:782px;top:2px;width:74px;height:73px;border-radius:8px;background:linear-gradient(#a2a2a2,#6e6e6e);box-shadow:inset 0 0 0 1px #8c8c8c"></div>
<div class="a" style="left:789px;top:9px;width:60px;height:17px;border-radius:6px;background:#8380b4;box-shadow:inset 2px 2px 2px rgba(0,0,0,.28),inset -1px -1px 1px rgba(255,255,255,.12)"></div>
<div class="t" style="left:794.009px;top:37.5px;font-size:16px;font-weight:bold;color:#2a2a2a;transform:scaleX(.95)">Blue</div>
<div class="t" style="left:794.009px;top:55.5px;font-size:16px;font-weight:bold;color:#2a2a2a;transform:scaleX(.95)">Flower</div>
<div class="a" style="left:860px;top:2px;width:74px;height:73px;border-radius:8px;background:linear-gradient(#a2a2a2,#6e6e6e);box-shadow:inset 0 0 0 1px #8c8c8c"></div>
<div class="a" style="left:867px;top:9px;width:60px;height:17px;border-radius:6px;background:#64beac;box-shadow:inset 2px 2px 2px rgba(0,0,0,.28),inset -1px -1px 1px rgba(255,255,255,.12)"></div>
<div class="t" style="left:873.282px;top:37.5px;font-size:16px;font-weight:bold;color:#2a2a2a;transform:scaleX(.95)">Bluish</div>
<div class="t" style="left:873.282px;top:55.5px;font-size:16px;font-weight:bold;color:#2a2a2a;transform:scaleX(.95)">Green</div>
<div class="a" style="left:938px;top:2px;width:74px;height:73px;border-radius:8px;background:linear-gradient(#a2a2a2,#6e6e6e);box-shadow:inset 0 0 0 1px #8c8c8c"></div>
<div class="a" style="left:945px;top:9px;width:60px;height:37px;border-radius:6px;background:#da7828;box-shadow:inset 2px 2px 2px rgba(0,0,0,.28),inset -1px -1px 1px rgba(255,255,255,.12)"></div>
<div class="t" style="left:915px;top:55.5px;width:120px;text-align:center;font-size:16px;font-weight:bold;color:#2a2a2a;transform:scaleX(.95);transform-origin:50% 0">Orange</div>
<div class="a" style="left:1016px;top:2px;width:74px;height:73px;border-radius:8px;background:linear-gradient(#a2a2a2,#6e6e6e);box-shadow:inset 0 0 0 1px #8c8c8c"></div>
<div class="a" style="left:1023px;top:9px;width:60px;height:17px;border-radius:6px;background:#485aaa;box-shadow:inset 2px 2px 2px rgba(0,0,0,.28),inset -1px -1px 1px rgba(255,255,255,.12)"></div>
<div class="t" style="left:1022.1px;top:37.5px;font-size:16px;font-weight:bold;color:#2a2a2a;transform:scaleX(.95)">Purplish</div>
<div class="t" style="left:1022.1px;top:55.5px;font-size:16px;font-weight:bold;color:#2a2a2a;transform:scaleX(.95)">Blue</div>
<div class="a" style="left:1094px;top:2px;width:74px;height:73px;border-radius:8px;background:linear-gradient(#a2a2a2,#6e6e6e);box-shadow:inset 0 0 0 1px #8c8c8c"></div>
<div class="a" style="left:1101px;top:9px;width:60px;height:17px;border-radius:6px;background:#c85464;box-shadow:inset 2px 2px 2px rgba(0,0,0,.28),inset -1px -1px 1px rgba(255,255,255,.12)"></div>
<div class="t" style="left:1096.72px;top:37.5px;font-size:16px;font-weight:bold;color:#2a2a2a;transform:scaleX(.95)">Moderate</div>
<div class="t" style="left:1096.72px;top:55.5px;font-size:16px;font-weight:bold;color:#2a2a2a;transform:scaleX(.95)">Red</div>
<div class="a" style="left:1172px;top:2px;width:74px;height:73px;border-radius:8px;background:linear-gradient(#a2a2a2,#6e6e6e);box-shadow:inset 0 0 0 1px #8c8c8c"></div>
<div class="a" style="left:1179px;top:9px;width:60px;height:37px;border-radius:6px;background:#5e3c6e;box-shadow:inset 2px 2px 2px rgba(0,0,0,.28),inset -1px -1px 1px rgba(255,255,255,.12)"></div>
<div class="t" style="left:1149px;top:55.5px;width:120px;text-align:center;font-size:16px;font-weight:bold;color:#2a2a2a;transform:scaleX(.95);transform-origin:50% 0">Purple</div>
<div class="a" style="left:1250px;top:2px;width:74px;height:73px;border-radius:8px;background:linear-gradient(#a2a2a2,#6e6e6e);box-shadow:inset 0 0 0 1px #8c8c8c"></div>
<div class="a" style="left:1257px;top:9px;width:60px;height:17px;border-radius:6px;background:#a0be3e;box-shadow:inset 2px 2px 2px rgba(0,0,0,.28),inset -1px -1px 1px rgba(255,255,255,.12)"></div>
<div class="t" style="left:1262.83px;top:37.5px;font-size:16px;font-weight:bold;color:#2a2a2a;transform:scaleX(.95)">Yellow</div>
<div class="t" style="left:1262.83px;top:55.5px;font-size:16px;font-weight:bold;color:#2a2a2a;transform:scaleX(.95)">Green</div>
<div class="a" style="left:1328px;top:2px;width:74px;height:73px;border-radius:8px;background:linear-gradient(#a2a2a2,#6e6e6e);box-shadow:inset 0 0 0 1px #8c8c8c"></div>
<div class="a" style="left:1335px;top:9px;width:60px;height:17px;border-radius:6px;background:#e8a22a;box-shadow:inset 2px 2px 2px rgba(0,0,0,.28),inset -1px -1px 1px rgba(255,255,255,.12)"></div>
<div class="t" style="left:1337.9px;top:37.5px;font-size:16px;font-weight:bold;color:#2a2a2a;transform:scaleX(.95)">Orange</div>
<div class="t" style="left:1337.9px;top:55.5px;font-size:16px;font-weight:bold;color:#2a2a2a;transform:scaleX(.95)">Yellow</div>
<div class="a" style="left:1406px;top:2px;width:74px;height:73px;border-radius:8px;background:linear-gradient(#a2a2a2,#6e6e6e);box-shadow:inset 0 0 0 1px #8c8c8c"></div>
<div class="a" style="left:1413px;top:9px;width:60px;height:37px;border-radius:6px;background:#343c9a;box-shadow:inset 2px 2px 2px rgba(0,0,0,.28),inset -1px -1px 1px rgba(255,255,255,.12)"></div>
<div class="t" style="left:1383px;top:55.5px;width:120px;text-align:center;font-size:16px;font-weight:bold;color:#2a2a2a;transform:scaleX(.95);transform-origin:50% 0">Blue</div>
<div class="a" style="left:1484px;top:2px;width:74px;height:73px;border-radius:8px;background:linear-gradient(#a2a2a2,#6e6e6e);box-shadow:inset 0 0 0 1px #8c8c8c"></div>
<div class="a" style="left:1491px;top:9px;width:60px;height:37px;border-radius:6px;background:#46964a;box-shadow:inset 2px 2px 2px rgba(0,0,0,.28),inset -1px -1px 1px rgba(255,255,255,.12)"></div>
<div class="t" style="left:1461px;top:55.5px;width:120px;text-align:center;font-size:16px;font-weight:bold;color:#2a2a2a;transform:scaleX(.95);transform-origin:50% 0">Green</div>
<div class="a" style="left:1562px;top:2px;width:74px;height:73px;border-radius:8px;background:linear-gradient(#a2a2a2,#6e6e6e);box-shadow:inset 0 0 0 1px #8c8c8c"></div>
<div class="a" style="left:1569px;top:9px;width:60px;height:37px;border-radius:6px;background:#b2303a;box-shadow:inset 2px 2px 2px rgba(0,0,0,.28),inset -1px -1px 1px rgba(255,255,255,.12)"></div>
<div class="t" style="left:1539px;top:55.5px;width:120px;text-align:center;font-size:16px;font-weight:bold;color:#2a2a2a;transform:scaleX(.95);transform-origin:50% 0">Red</div>
<div class="a" style="left:1640px;top:2px;width:74px;height:73px;border-radius:8px;background:linear-gradient(#a2a2a2,#6e6e6e);box-shadow:inset 0 0 0 1px #8c8c8c"></div>
<div class="a" style="left:1647px;top:9px;width:60px;height:37px;border-radius:6px;background:#eec81e;box-shadow:inset 2px 2px 2px rgba(0,0,0,.28),inset -1px -1px 1px rgba(255,255,255,.12)"></div>
<div class="t" style="left:1617px;top:55.5px;width:120px;text-align:center;font-size:16px;font-weight:bold;color:#2a2a2a;transform:scaleX(.95);transform-origin:50% 0">Yellow</div>
<div class="a" style="left:1718px;top:2px;width:74px;height:73px;border-radius:8px;background:linear-gradient(#a2a2a2,#6e6e6e);box-shadow:inset 0 0 0 1px #8c8c8c"></div>
<div class="a" style="left:1725px;top:9px;width:60px;height:37px;border-radius:6px;background:#be5498;box-shadow:inset 2px 2px 2px rgba(0,0,0,.28),inset -1px -1px 1px rgba(255,255,255,.12)"></div>
<div class="t" style="left:1695px;top:55.5px;width:120px;text-align:center;font-size:16px;font-weight:bold;color:#2a2a2a;transform:scaleX(.95);transform-origin:50% 0">Magenta</div>
<div class="a" style="left:0;top:77px;width:1776px;height:18px;background:#616161"></div>
<div class="a" style="left:21px;top:78px;width:1311px;height:16px;background:#464646;border-radius:8px"></div>
<div class="a" style="left:2px;top:78px;width:16px;height:16px;background:#7a7a7a;border-radius:3px"></div>
<div class="a" style="left:1756px;top:78px;width:16px;height:16px;background:#7a7a7a;border-radius:3px"></div>
<svg width="1776" height="95" viewBox="0 0 1776 95"><path d="M14 81v10l-7-5z" fill="#3c3c3c"/><path d="M1761 81v10l7-5z" fill="#3c3c3c"/></svg>
</div>
<div class="a" style="left:2076px;top:1435px;width:72px;height:93px;border-radius:7px;background:linear-gradient(#9a9a9a,#6c6c6c);box-shadow:inset 0 0 0 1px #8a8a8a"></div>
<div class="a" style="left:2076px;top:1462px;width:72px;height:1.500px;background:#5a5a5a"></div>
<div class="rb" style="left:2100px;top:1438px;width:23px;height:22px;background:linear-gradient(#aaa,#7c7c7c)"></div>
<div class="a" style="left:2089px;top:1472px;width:46px;height:46px;border-radius:7px;background:linear-gradient(#bdbdbd 0,#aaa 49%,#8e8e8e 51%,#9a9a9a 100%);border:3px solid #2a2a2a"></div>
<div class="a" style="left:2101.500px;top:1484.500px;width:21px;height:21px;background:linear-gradient(#333 0,#111 49%,#000 50%)"></div>
<svg width="2560" height="1528" viewBox="0 0 2560 1528"><path d="M2105 1452h13l-6.500-7z" fill="#333"/></svg>
<div class="a" style="left:2149.1px;top:1435px;width:68px;height:44.600px;background:linear-gradient(#b2b2b2,#7c7c7c);border-radius:6px 0 0 0"></div>
<div class="rb" style="left:2168.1px;top:1443px;width:30px;height:30px;background:linear-gradient(#888,#a6a6a6)"></div>
<div class="a" style="left:2218.1px;top:1435px;width:67px;height:44.600px;background:linear-gradient(#b2b2b2,#7c7c7c);border-radius:0"></div>
<div class="rb" style="left:2236.6px;top:1443px;width:30px;height:30px;background:linear-gradient(#888,#a6a6a6)"></div>
<div class="a" style="left:2286.1px;top:1435px;width:65.9px;height:44.600px;background:linear-gradient(#b2b2b2,#7c7c7c);border-radius:0"></div>
<div class="rb" style="left:2304.05px;top:1443px;width:30px;height:30px;background:linear-gradient(#888,#a6a6a6)"></div>
<div class="a" style="left:2353px;top:1435px;width:66.9px;height:44.600px;background:linear-gradient(#b2b2b2,#7c7c7c);border-radius:0"></div>
<div class="rb" style="left:2371.45px;top:1443px;width:30px;height:30px;background:linear-gradient(#888,#a6a6a6)"></div>
<div class="a" style="left:2420.9px;top:1435px;width:66.6px;height:44.600px;background:linear-gradient(#484848,#3a3a3a);border-radius:0"></div>
<div class="rb" style="left:2439.2px;top:1443px;width:30px;height:30px;background:linear-gradient(#2c2c2c,#444)"></div>
<div class="a" style="left:2488.5px;top:1435px;width:66.9px;height:44.600px;background:linear-gradient(#b2b2b2,#7c7c7c);border-radius:0 6px 0 0"></div>
<div class="rb" style="left:2506.95px;top:1443px;width:30px;height:30px;background:linear-gradient(#888,#a6a6a6)"></div>
<div class="a" style="left:2149.100px;top:1481.700px;width:203.400px;height:44.500px;background:linear-gradient(#b0b0b0,#8a8a8a);border-radius:6px 0 0 6px"></div>
<div class="a" style="left:2353.600px;top:1481.700px;width:202.800px;height:44.500px;background:linear-gradient(#b0b0b0,#8a8a8a);border-radius:0 6px 6px 0"></div>
<div class="rb" style="left:2177px;top:1490px;width:30px;height:30px;background:linear-gradient(#909090,#b4b4b4)"></div>
<div class="rb" style="left:2503px;top:1490px;width:30px;height:30px;background:linear-gradient(#909090,#b4b4b4)"></div>
<div class="t" style="left:2236.5px;top:1488.8px;font-size:31.5px;transform:scaleX(1.0487);color:#303030;filter:blur(.4px)">Back</div>
<div class="t" style="left:2395.4px;top:1488.8px;font-size:31.5px;transform:scaleX(1.1895);color:#303030;filter:blur(.4px)">Next</div>
<div class="t" style="left:2186.0px;top:1490.5px;font-size:24px;transform:scaleX(0.9009);color:#484848;">&#171;</div>
<div class="t" style="left:2512.0px;top:1490.5px;font-size:24px;transform:scaleX(0.9009);color:#484848;">&#187;</div>
<svg width="2560" height="1528" viewBox="0 0 2560 1528" fill="#303030"><rect x="2179.500" y="1452.500" width="8.500" height="12"/><path d="M2247 1451v15l12-7.500z"/><path d="M2313.500 1451h4v2h-2v11h2v2h-4zM2326.500 1451h-4v2h2v11h-2v2h4z"/><circle cx="2317" cy="1461" r="1"/><circle cx="2320" cy="1461" r="1"/><circle cx="2323" cy="1461" r="1"/><text x="2387" y="1466" font-size="22" text-anchor="middle">&#8734;</text><path d="M2461 1455a7 7 0 1 0 1.500 7" fill="none" stroke="#1a1a1a" stroke-width="2.200"/><path d="M2457 1450l7 2 -4 5z" fill="#1a1a1a"/></svg>
<svg width="2560" height="1528" viewBox="0 0 2560 1528">
<defs><filter id="wsh" x="-5%" y="-20%" width="110%" height="140%"><feGaussianBlur stdDeviation="1.200"/></filter></defs>
<g filter="url(#wsh)" opacity=".35" fill="none" stroke="#000" stroke-width="7"><path d="M2178 1448l48 13.500 1.500 24 -39.500 4.500"/><path d="M2178 1447l1.500 48 29 16.500 53.500 -18 -30 -6.500"/></g>
<g fill="none" stroke="#f0f0f0" stroke-width="7.4" stroke-opacity="0.5" stroke-linejoin="miter"><path d="M2177.800 1448.200l48.400 13.300 1.300 23.800 -39.500 4.400"/><path d="M2177.800 1446l1.700 49 29 16.500 53.500 -18 -29.500 -6.300"/></g>
<g fill="none" stroke="#8e2830" stroke-width="5.4" stroke-opacity="0.8" stroke-linejoin="miter"><path d="M2177.800 1448.200l48.400 13.300 1.300 23.800 -39.500 4.400"/><path d="M2177.800 1446l1.700 49 29 16.500 53.500 -18 -29.500 -6.300"/></g>
<path d="M2188.500 1464l9 -5.500 8.500 13 24 -30 3.500 2.500 -27 42z" fill="#383838" fill-opacity=".9" stroke="#f0f0f0" stroke-opacity=".6" stroke-width="1.200"/>
<text x="2233.800" y="1483.800" font-size="34.600" font-weight="bold" fill="#000" opacity=".3" filter="url(#wsh)" textLength="197" lengthAdjust="spacingAndGlyphs">NOTEBOOK</text>
<text x="2233.800" y="1483.800" font-size="34.600" font-weight="bold" fill="none" stroke="#f0f0f0" stroke-opacity=".6" stroke-width="4.600" stroke-linejoin="round" textLength="197" lengthAdjust="spacingAndGlyphs">NOTEBOOK</text>
<text x="2233.800" y="1483.800" font-size="34.600" font-weight="bold" fill="#8e2830" stroke="#8e2830" stroke-width="1.700" stroke-linejoin="round" opacity=".8" textLength="197" lengthAdjust="spacingAndGlyphs">NOTEBOOK</text>
<text x="2431.500" y="1483.800" font-size="34.600" fill="none" stroke="#f0f0f0" stroke-opacity=".6" stroke-width="3.200" stroke-linejoin="round" textLength="117" lengthAdjust="spacingAndGlyphs">CHECK</text>
<text x="2431.500" y="1483.800" font-size="34.600" fill="#2a2a2a" stroke="#2a2a2a" stroke-width=".5" opacity=".85" textLength="117" lengthAdjust="spacingAndGlyphs">CHECK</text>
</svg>
</body></html>
